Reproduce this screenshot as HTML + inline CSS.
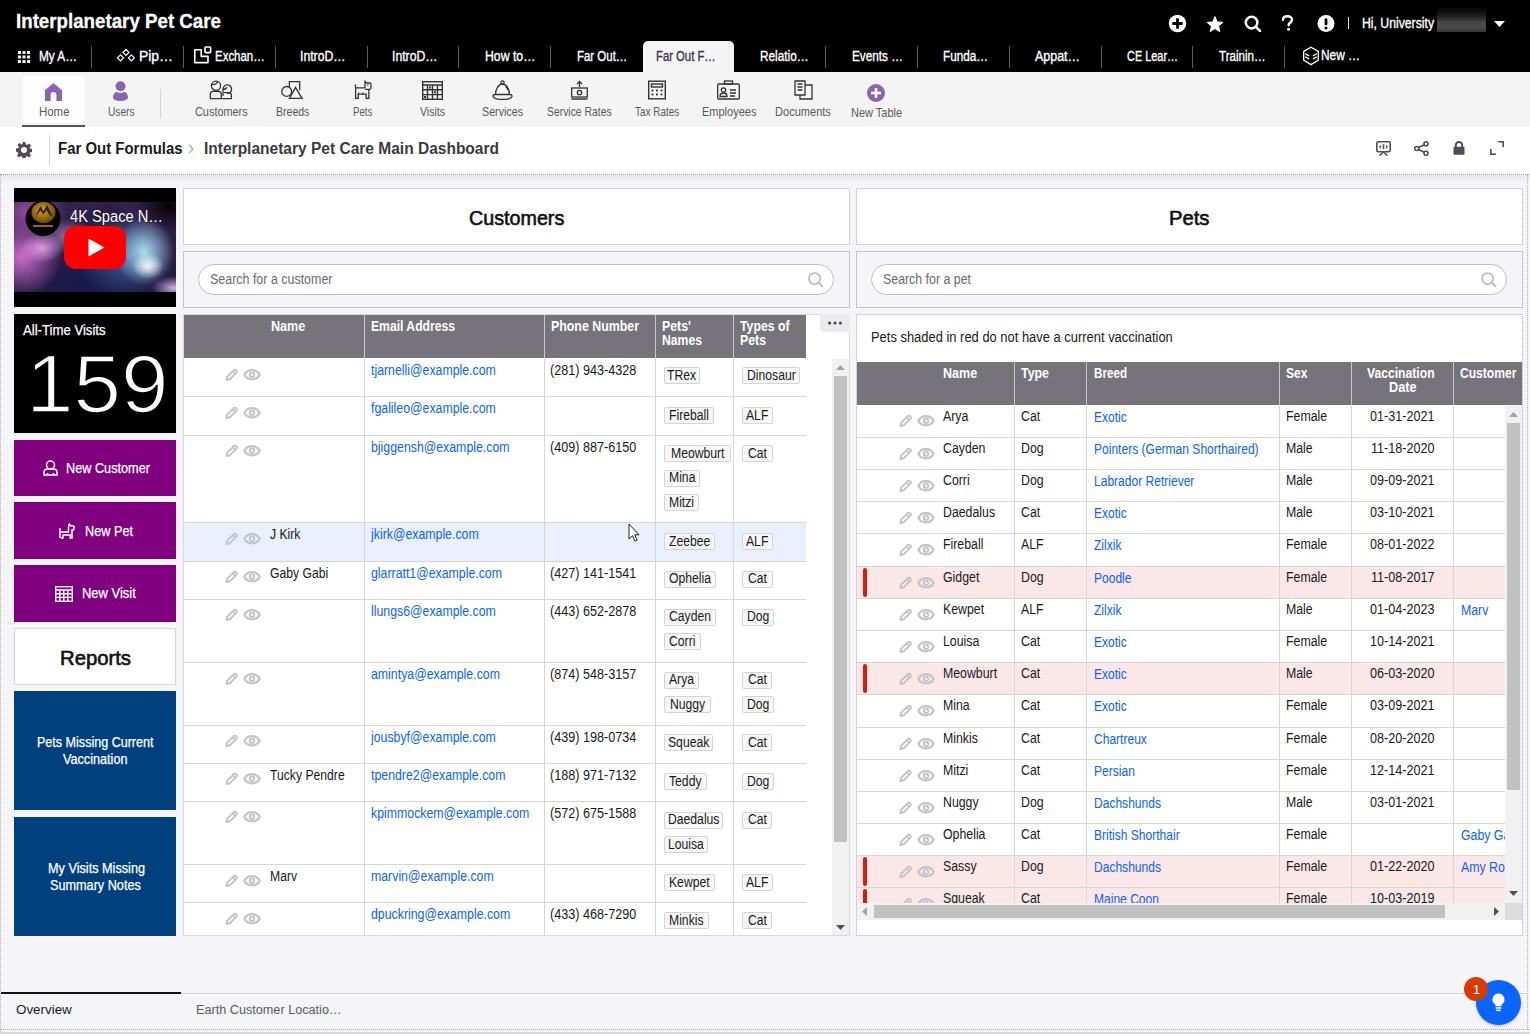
<!DOCTYPE html>
<html><head><meta charset="utf-8">
<style>
*{box-sizing:border-box;margin:0;padding:0}
html,body{width:1530px;height:1034px;overflow:hidden}
body{font-family:"Liberation Sans",sans-serif;background:#f4f4f6;position:relative;color:#1a1a1a}
.a{position:absolute}
.nw{white-space:nowrap}
svg{display:block}

</style></head><body>
<div class="a" style="left:0px;top:0px;width:1530px;height:72px;background:#000"></div>
<div class="a nw" style="left:16.00px;top:12.19px;font-size:19.5px;line-height:19.5px;color:#fff;font-weight:bold;transform:scaleX(0.9601);transform-origin:0 0;-webkit-text-stroke-width:0.3px">Interplanetary Pet Care</div>
<div class="a" style="left:643px;top:41px;width:91px;height:31px;background:#f4f4f4;border-radius:5px 5px 0 0"></div>
<div class="a" style="left:91px;top:46px;width:1px;height:22px;background:#5c5c5c"></div>
<div class="a" style="left:183px;top:46px;width:1px;height:22px;background:#5c5c5c"></div>
<div class="a" style="left:275px;top:46px;width:1px;height:22px;background:#5c5c5c"></div>
<div class="a" style="left:367px;top:46px;width:1px;height:22px;background:#5c5c5c"></div>
<div class="a" style="left:458px;top:46px;width:1px;height:22px;background:#5c5c5c"></div>
<div class="a" style="left:550px;top:46px;width:1px;height:22px;background:#5c5c5c"></div>
<div class="a" style="left:825px;top:46px;width:1px;height:22px;background:#5c5c5c"></div>
<div class="a" style="left:917px;top:46px;width:1px;height:22px;background:#5c5c5c"></div>
<div class="a" style="left:1009px;top:46px;width:1px;height:22px;background:#5c5c5c"></div>
<div class="a" style="left:1101px;top:46px;width:1px;height:22px;background:#5c5c5c"></div>
<div class="a" style="left:1192px;top:46px;width:1px;height:22px;background:#5c5c5c"></div>
<div class="a" style="left:1284px;top:46px;width:1px;height:22px;background:#5c5c5c"></div>
<div class="a nw" style="left:39.00px;top:49.15px;font-size:14px;line-height:14px;color:#fff;transform:scaleX(0.8421);transform-origin:0 0;-webkit-text-stroke-width:0.35px">My A…</div>
<div class="a nw" style="left:138.80px;top:49.15px;font-size:14px;line-height:14px;color:#fff;transform:scaleX(0.9932);transform-origin:0 0;-webkit-text-stroke-width:0.35px">Pip…</div>
<div class="a nw" style="left:214.60px;top:49.15px;font-size:14px;line-height:14px;color:#fff;transform:scaleX(0.8187);transform-origin:0 0;-webkit-text-stroke-width:0.35px">Exchan…</div>
<div class="a nw" style="left:300.40px;top:49.15px;font-size:14px;line-height:14px;color:#fff;transform:scaleX(0.8729);transform-origin:0 0;-webkit-text-stroke-width:0.35px">IntroD…</div>
<div class="a nw" style="left:392.00px;top:49.15px;font-size:14px;line-height:14px;color:#fff;transform:scaleX(0.8729);transform-origin:0 0;-webkit-text-stroke-width:0.35px">IntroD…</div>
<div class="a nw" style="left:484.70px;top:49.15px;font-size:14px;line-height:14px;color:#fff;transform:scaleX(0.8753);transform-origin:0 0;-webkit-text-stroke-width:0.35px">How to…</div>
<div class="a nw" style="left:576.50px;top:49.15px;font-size:14px;line-height:14px;color:#fff;transform:scaleX(0.8183);transform-origin:0 0;-webkit-text-stroke-width:0.35px">Far Out…</div>
<div class="a nw" style="left:656.00px;top:49.15px;font-size:14px;line-height:14px;color:#3c3650;transform:scaleX(0.8064);transform-origin:0 0;-webkit-text-stroke-width:0.35px">Far Out F…</div>
<div class="a nw" style="left:759.70px;top:49.15px;font-size:14px;line-height:14px;color:#fff;transform:scaleX(0.8421);transform-origin:0 0;-webkit-text-stroke-width:0.35px">Relatio…</div>
<div class="a nw" style="left:851.50px;top:49.15px;font-size:14px;line-height:14px;color:#fff;transform:scaleX(0.8402);transform-origin:0 0;-webkit-text-stroke-width:0.35px">Events …</div>
<div class="a nw" style="left:943.20px;top:49.15px;font-size:14px;line-height:14px;color:#fff;transform:scaleX(0.8379);transform-origin:0 0;-webkit-text-stroke-width:0.35px">Funda…</div>
<div class="a nw" style="left:1035.00px;top:49.15px;font-size:14px;line-height:14px;color:#fff;transform:scaleX(0.8894);transform-origin:0 0;-webkit-text-stroke-width:0.35px">Appat…</div>
<div class="a nw" style="left:1126.60px;top:49.15px;font-size:14px;line-height:14px;color:#fff;transform:scaleX(0.7803);transform-origin:0 0;-webkit-text-stroke-width:0.35px">CE Lear…</div>
<div class="a nw" style="left:1218.80px;top:49.15px;font-size:14px;line-height:14px;color:#fff;transform:scaleX(0.8262);transform-origin:0 0;-webkit-text-stroke-width:0.35px">Trainin…</div>
<div class="a nw" style="left:1320.50px;top:47.95px;font-size:14px;line-height:14px;color:#fff;transform:scaleX(0.8496);transform-origin:0 0;-webkit-text-stroke-width:0.35px">New …</div>
<svg class="a" style="left:18px;top:51px;" width="12" height="12" viewBox="0 0 12 12"><g fill="#fff"><rect x="0" y="0" width="3" height="3"/><rect x="4.5" y="0" width="3" height="3"/><rect x="9" y="0" width="3" height="3"/><rect x="0" y="4.5" width="3" height="3"/><rect x="4.5" y="4.5" width="3" height="3"/><rect x="9" y="4.5" width="3" height="3"/><rect x="0" y="9" width="3" height="3"/><rect x="4.5" y="9" width="3" height="3"/><rect x="9" y="9" width="3" height="3"/></g></svg>
<svg class="a" style="left:116px;top:48px;" width="19" height="15" viewBox="0 0 19 15"><g fill="none" stroke="#fff" stroke-width="1.3" stroke-linejoin="round"><path d="M4.5 6.9l3 3-3 3-3-3zM10 1.4l3 3-3 3-3-3zM15.4 6.9l3 3-3 3-3-3z"/></g></svg>
<svg class="a" style="left:193px;top:46px;" width="19" height="18" viewBox="0 0 19 18"><g fill="none" stroke="#fff" stroke-width="1.6" stroke-linejoin="round"><path d="M1.8 3.8h6.4v6.6h6.8v6.2H1.8z"/><rect x="12" y="1" width="5.6" height="5.6" rx="0.8"/></g></svg>
<svg class="a" style="left:1302px;top:46px;" width="18" height="20" viewBox="0 0 18 20"><g fill="none" stroke="#fff" stroke-width="1.3" stroke-linejoin="round" stroke-linecap="round"><path d="M9 1.2l7.3 4.2v8.8L9 18.6 1.7 14.2V5.4z"/><path d="M3.6 8l3 1.6M3.6 11l3 1.6M14.4 8l-3 1.6M14.4 11l-3 1.6"/></g></svg>
<svg class="a" style="left:1168px;top:14px;" width="19" height="19" viewBox="0 0 19 19"><circle cx="9.5" cy="9.5" r="8.7" fill="#fff"/><rect x="8.1" y="4.3" width="2.8" height="10.4" rx="0.5" fill="#000"/><rect x="4.3" y="8.1" width="10.4" height="2.8" rx="0.5" fill="#000"/></svg>
<svg class="a" style="left:1206px;top:15px;" width="18" height="17" viewBox="0 0 18 17"><path d="M9.00,1.60 L11.17,6.91 L16.89,7.34 L12.52,11.04 L13.88,16.61 L9.00,13.60 L4.12,16.61 L5.48,11.04 L1.11,7.34 L6.83,6.91z" fill="#fff" stroke="#fff" stroke-width="1" stroke-linejoin="round"/></svg>
<svg class="a" style="left:1244px;top:15px;" width="18" height="17" viewBox="0 0 18 17"><circle cx="7.6" cy="7.6" r="5.8" fill="none" stroke="#fff" stroke-width="2.5"/><path d="M11.7 11.7l4.3 4.3" stroke="#fff" stroke-width="2.6" stroke-linecap="round"/></svg>
<svg class="a" style="left:1281px;top:15px;" width="13" height="16" viewBox="0 0 13 16"><path d="M2 4.8C2 2.4 4 1.2 6.5 1.2S11 2.6 11 4.7c0 2.6-3.4 3-3.4 5.6" fill="none" stroke="#fff" stroke-width="2.4" stroke-linecap="round"/><circle cx="7.5" cy="14.2" r="1.5" fill="#fff"/></svg>
<svg class="a" style="left:1317px;top:15px;" width="18" height="17" viewBox="0 0 18 17"><circle cx="9" cy="8.5" r="8.5" fill="#fff"/><rect x="7.6" y="3.3" width="2.8" height="7" rx="1.2" fill="#000"/><circle cx="9" cy="12.9" r="1.5" fill="#000"/></svg>
<div class="a" style="left:1348px;top:17px;width:1px;height:12px;background:#ddd"></div>
<div class="a nw" style="left:1362.00px;top:15.55px;font-size:14px;line-height:14px;color:#fff;transform:scaleX(0.8731);transform-origin:0 0;-webkit-text-stroke-width:0.35px">Hi, University</div>
<div class="a" style="left:1437px;top:8px;width:49px;height:24px;background:linear-gradient(#080808 5%,#1a1a1a 30%,#464847 60%,#4a4b49 80%,#353535)"></div>
<svg class="a" style="left:1494px;top:21px;" width="11" height="6" viewBox="0 0 11 6"><path d="M0 0h11L5.5 6z" fill="#fff"/></svg>
<div class="a" style="left:0px;top:72px;width:1530px;height:55px;background:#f4f4f4"></div>
<div class="a" style="left:22px;top:76px;width:63px;height:47px;background:#fdfdfd;border-radius:5px 5px 0 0"></div>
<div class="a" style="left:22px;top:125px;width:63px;height:2px;background:#555"></div>
<div class="a" style="left:160px;top:89px;width:1px;height:29px;background:#d2d2d2"></div>
<div class="a nw" style="left:38.55px;top:106.10px;font-size:12.4px;line-height:12.4px;color:#5a5a5a;transform:scaleX(0.9225);transform-origin:0 0;">Home</div>
<div class="a nw" style="left:107.70px;top:106.10px;font-size:12.4px;line-height:12.4px;color:#5a5a5a;transform:scaleX(0.8220);transform-origin:0 0;">Users</div>
<div class="a nw" style="left:194.75px;top:106.10px;font-size:12.4px;line-height:12.4px;color:#5a5a5a;transform:scaleX(0.8797);transform-origin:0 0;">Customers</div>
<div class="a nw" style="left:275.60px;top:106.10px;font-size:12.4px;line-height:12.4px;color:#5a5a5a;transform:scaleX(0.8506);transform-origin:0 0;">Breeds</div>
<div class="a nw" style="left:352.65px;top:106.10px;font-size:12.4px;line-height:12.4px;color:#5a5a5a;transform:scaleX(0.7783);transform-origin:0 0;">Pets</div>
<div class="a nw" style="left:420.00px;top:106.10px;font-size:12.4px;line-height:12.4px;color:#5a5a5a;transform:scaleX(0.8506);transform-origin:0 0;">Visits</div>
<div class="a nw" style="left:482.00px;top:106.10px;font-size:12.4px;line-height:12.4px;color:#5a5a5a;transform:scaleX(0.8629);transform-origin:0 0;">Services</div>
<div class="a nw" style="left:547.40px;top:106.10px;font-size:12.4px;line-height:12.4px;color:#5a5a5a;transform:scaleX(0.8374);transform-origin:0 0;">Service Rates</div>
<div class="a nw" style="left:634.80px;top:106.10px;font-size:12.4px;line-height:12.4px;color:#5a5a5a;transform:scaleX(0.8023);transform-origin:0 0;">Tax Rates</div>
<div class="a nw" style="left:701.50px;top:106.10px;font-size:12.4px;line-height:12.4px;color:#5a5a5a;transform:scaleX(0.8875);transform-origin:0 0;">Employees</div>
<div class="a nw" style="left:775.35px;top:106.10px;font-size:12.4px;line-height:12.4px;color:#5a5a5a;transform:scaleX(0.8919);transform-origin:0 0;">Documents</div>
<div class="a nw" style="left:850.85px;top:106.80px;font-size:12.4px;line-height:12.4px;color:#5a5a5a;transform:scaleX(0.8865);transform-origin:0 0;">New Table</div>
<svg class="a" style="left:45px;top:83px;" width="17" height="18" viewBox="0 0 17 18"><path d="M8.5 0L17 7.2V18h-5.6v-6.2a2.9 2.9 0 0 0-5.8 0V18H0V7.2z" fill="#8a64b0"/></svg>
<svg class="a" style="left:113px;top:81px;" width="15" height="20" viewBox="0 0 15 20"><circle cx="7.5" cy="5.2" r="5" fill="#8a64b0"/><path d="M0 16.5c0-3.6 2-5.6 4.2-5.6 2 1.3 4.6 1.3 6.6 0 2.2 0 4.2 2 4.2 5.6 0 2-3.4 3.5-7.5 3.5S0 18.5 0 16.5z" fill="#8a64b0"/></svg>
<svg class="a" style="left:209px;top:80px;" width="24" height="20" viewBox="0 0 24 20"><g fill="none" stroke="#333" stroke-width="1.3"><circle cx="7" cy="5.7" r="4.6"/><path d="M3 4.6c2 .3 4.3-.6 5.6-2.4M1.3 18.6v-4.2c0-1.7 1.2-3 3-3h5c1.7 0 3 1.3 3 3v4.2zM13.2 18.6h9.2v-3.2c0-1.5-1.2-2.7-2.7-2.7h-4.6M14 9.5a4.3 4.3 0 1 1 4.3 4M14 9.5v6.5M14 9.5c1.5 0 3-.8 4-2"/></g></svg>
<svg class="a" style="left:281px;top:80px;" width="23" height="20" viewBox="0 0 23 20"><g fill="none" stroke="#333" stroke-width="1.3"><circle cx="5.7" cy="11.4" r="4.9"/><path d="M8.4 7.3V1.7h10.3v8.5M8.5 18.4l6-11 6.5 11z"/></g></svg>
<svg class="a" style="left:354px;top:80px;" width="18" height="20" viewBox="0 0 18 20"><g fill="none" stroke="#333" stroke-width="1.3"><path d="M1.6 4.5c-.3 1-.3 2.2.2 3.2M1.6 7.8h9.6M1.6 7.8v10.6h2.6v-4.2h8v4.2h2.7V9.3M11 7.8V1.5l1.5 1.5h3c.9 0 1.5.6 1.5 1.5v3.3c0 .9-.6 1.5-1.5 1.5H11M4.5 12.5v1M9 12.5v1"/></g><circle cx="13.8" cy="5.2" r=".7" fill="#333"/></svg>
<svg class="a" style="left:422px;top:80px;" width="21" height="20" viewBox="0 0 21 20"><g fill="none" stroke="#333" stroke-width="1.4"><rect x="0.7" y="1.7" width="19.6" height="17.6"/><path d="M1 5h19M1 9.8h19M1 14.6h19M5.5 5v14M10.5 5v14M15.5 5v14"/></g><g fill="#333"><rect x="7" y="6.5" width="2" height="2"/><rect x="12" y="11.3" width="2" height="2"/><rect x="2" y="16" width="2" height="2"/></g></svg>
<svg class="a" style="left:492px;top:80px;" width="21" height="20" viewBox="0 0 21 20"><g fill="none" stroke="#333" stroke-width="1.3"><circle cx="10.5" cy="2.5" r="1.6"/><path d="M3.5 14.5c0-5 3-10.5 7-10.5s7 5.5 7 10.5M1 16.5c0-1.5 1-2 2-2h15c1 0 2 .5 2 2 0 1.5-4 3-9.5 3S1 18 1 16.5zM13.5 6.5c1.3.8 2 2 2.3 3.5"/></g></svg>
<svg class="a" style="left:571px;top:80px;" width="17" height="20" viewBox="0 0 17 20"><g fill="none" stroke="#333" stroke-width="1.3"><rect x="0.7" y="8" width="15.6" height="9"/><circle cx="8.5" cy="12.5" r="2.2"/><path d="M8.5 7V1.5M6 4l2.5-2.5L11 4M0.5 19h16M3 10.5l0 0M14 14.5l0 0"/></g></svg>
<svg class="a" style="left:648px;top:80px;" width="18" height="20" viewBox="0 0 18 20"><g fill="none" stroke="#333" stroke-width="1.4"><rect x="0.7" y="1.2" width="16.6" height="17.6"/><rect x="3.5" y="4" width="11" height="3"/></g><g fill="#333"><circle cx="4.5" cy="10.5" r="1.1"/><circle cx="9" cy="10.5" r="1.1"/><circle cx="13.5" cy="10.5" r="1.1"/><circle cx="4.5" cy="14.5" r="1.1"/><circle cx="9" cy="14.5" r="1.1"/><circle cx="13.5" cy="14.5" r="1.1"/></g></svg>
<svg class="a" style="left:717px;top:80px;" width="23" height="20" viewBox="0 0 23 20"><g fill="none" stroke="#333" stroke-width="1.3"><rect x="0.7" y="4" width="21.6" height="15" rx="1"/><rect x="7.5" y="1" width="8" height="3"/><circle cx="6.5" cy="10" r="2.2"/><path d="M3 16.5c0-2.5 1.5-3.5 3.5-3.5s3.5 1 3.5 3.5zM13 10h6M13 13h6M13 16h5"/></g></svg>
<svg class="a" style="left:794px;top:80px;" width="19" height="20" viewBox="0 0 19 20"><g fill="none" stroke="#333" stroke-width="1.3"><path d="M1 1h10v14H1zM11 5h7v14H6v-4M3.5 4h5M3.5 7h5M3.5 10h5"/></g></svg>
<svg class="a" style="left:867px;top:84px;" width="18" height="18" viewBox="0 0 18 18"><circle cx="9" cy="9" r="9" fill="#8a64b0"/><rect x="7.7" y="4" width="2.6" height="10" fill="#fff"/><rect x="4" y="7.7" width="10" height="2.6" fill="#fff"/></svg>
<div class="a" style="left:0px;top:127px;width:1530px;height:47px;background:#fff"></div>
<svg class="a" style="left:16px;top:142px;" width="16" height="16" viewBox="0 0 16 16"><path fill="#4f4b58" d="M6.6 0h2.8l.4 2.3 1.3.6 1.9-1.4 2 2-1.4 1.9.6 1.3 2.3.4v2.8l-2.3.4-.6 1.3 1.4 1.9-2 2-1.9-1.4-1.3.6-.4 2.3H6.6l-.4-2.3-1.3-.6-1.9 1.4-2-2 1.4-1.9-.6-1.3L0 9.4V6.6l2.3-.4.6-1.3-1.4-1.9 2-2 1.9 1.4 1.3-.6zM8 5a3 3 0 1 0 0 6 3 3 0 0 0 0-6z"/></svg>
<div class="a" style="left:49px;top:135px;width:1px;height:31px;background:#d8d8d8"></div>
<div class="a nw" style="left:58.00px;top:140.92px;font-size:15.8px;line-height:15.8px;color:#1a1a1a;font-weight:bold;transform:scaleX(0.9463);transform-origin:0 0;">Far Out Formulas</div>
<svg class="a" style="left:188px;top:144px;" width="6" height="10" viewBox="0 0 6 10"><path d="M1 1l4 4-4 4" fill="none" stroke="#aaa" stroke-width="1.3"/></svg>
<div class="a nw" style="left:204.00px;top:140.92px;font-size:15.8px;line-height:15.8px;color:#3a3a42;font-weight:bold;transform:scaleX(0.9826);transform-origin:0 0;">Interplanetary Pet Care Main Dashboard</div>
<svg class="a" style="left:1376px;top:141px;" width="15" height="15" viewBox="0 0 15 15"><g fill="none" stroke="#4f4b58" stroke-width="1.6"><rect x="0.8" y="0.8" width="13.4" height="10" rx="1.5"/><path d="M3.5 14.5l4-3.5 4 3.5"/></g><g stroke="#4f4b58" stroke-width="1.6"><path d="M4.3 4.5v2.5M7.5 3.2v5M10.7 4.5v2.5"/></g></svg>
<svg class="a" style="left:1414px;top:141px;" width="15" height="15" viewBox="0 0 15 15"><g fill="none" stroke="#4f4b58" stroke-width="1.6"><circle cx="12" cy="2.8" r="2"/><circle cx="2.8" cy="7.5" r="2"/><circle cx="12" cy="12.2" r="2"/><path d="M4.6 6.5l5.6-2.8M4.6 8.5l5.6 2.8"/></g></svg>
<svg class="a" style="left:1453px;top:141px;" width="12" height="14" viewBox="0 0 12 14"><path d="M2.8 6V4.2a3.2 3.2 0 0 1 6.4 0V6" fill="none" stroke="#4f4b58" stroke-width="2"/><rect x="0.5" y="5.8" width="11" height="8" rx="1" fill="#4f4b58"/></svg>
<svg class="a" style="left:1490px;top:141px;" width="14" height="14" viewBox="0 0 14 14"><g fill="none" stroke="#4f4b58" stroke-width="1.6"><path d="M8 0.8h5.2V6M0.8 8v5.2H6"/></g></svg>
<div class="a" style="left:0px;top:174px;width:1530px;height:860px;background:#f5f5f7;border-top:1px dotted #9c9c9c;border-left:1px dotted #b0b0b0"></div>
<div class="a" style="left:1px;top:175px;width:1529px;height:8px;background:linear-gradient(#e8e8ec,#f5f5f7)"></div>
<div class="a" style="left:1527px;top:175px;width:1px;height:855px;border-left:1px dotted #b0b0b0"></div>
<div class="a" style="left:0px;top:1029px;width:1530px;height:1px;border-top:1px dotted #a0a0a0"></div>
<div class="a" style="left:0px;top:1032px;width:1530px;height:2px;background:#d8d8d8"></div>
<div class="a" style="left:14px;top:188px;width:162px;height:119px;background:#000"></div>
<div class="a" style="left:14px;top:202px;width:162px;height:90px;background:radial-gradient(ellipse 16px 13px at 134px 64px,rgba(250,253,255,.95),rgba(250,253,255,0)),radial-gradient(ellipse 30px 34px at 130px 50px,rgba(175,228,245,.95),rgba(175,228,245,0)),radial-gradient(ellipse 22px 12px at 160px 86px,rgba(230,190,250,.9),rgba(230,190,250,0)),radial-gradient(ellipse 34px 24px at 156px 4px,rgba(0,0,0,.95),rgba(0,0,0,0)),radial-gradient(ellipse 50px 45px at 112px 52px,rgba(60,105,175,.85),rgba(60,105,175,0)),radial-gradient(ellipse 22px 15px at 28px 46px,rgba(240,170,240,.85),rgba(240,170,240,0)),radial-gradient(ellipse 40px 40px at 8px 55px,rgba(215,110,215,.95),rgba(215,110,215,0)),radial-gradient(ellipse 40px 26px at 14px 10px,rgba(160,80,170,.9),rgba(160,80,170,0)),radial-gradient(ellipse 26px 18px at 52px 34px,rgba(205,160,225,.6),rgba(205,160,225,0)),radial-gradient(ellipse 45px 26px at 70px 78px,rgba(25,25,80,.95),rgba(25,25,80,0)),radial-gradient(ellipse 25px 20px at 95px 18px,rgba(40,20,60,.8),rgba(40,20,60,0)),linear-gradient(#35204a,#1e1a40)"></div>
<svg class="a" style="left:25px;top:200px;" width="36" height="36" viewBox="0 0 36 36"><defs><radialGradient id="gd" cx=".45" cy=".4" r=".6"><stop offset="0" stop-color="#d8a020"/><stop offset="1" stop-color="#6a4a08"/></radialGradient></defs><circle cx="18" cy="18.5" r="17.5" fill="#050505"/><ellipse cx="18.5" cy="12.5" rx="12" ry="10.5" fill="url(#gd)"/><path d="M10 17L15.5 6l3 5.5L22 5l6 12-4-2.5-2.5-4.5-3 4.5-3-4z" fill="#2e2006"/><rect x="8" y="25" width="20" height="2" fill="#8a6a18"/></svg>
<div class="a nw" style="left:70.00px;top:209.45px;font-size:16px;line-height:16px;color:#fff;transform:scaleX(0.9172);transform-origin:0 0;text-shadow:0 0 2px rgba(0,0,0,.6)">4K Space N…</div>
<svg class="a" style="left:64px;top:226px;" width="62" height="43" viewBox="0 0 62 43"><rect x="0" y="0" width="62" height="43" rx="12" fill="#f00"/><path d="M24.5 12.5L40.5 21.5 24.5 30.5z" fill="#fff"/></svg>
<div class="a" style="left:14px;top:314px;width:162px;height:119px;background:#000"></div>
<div class="a nw" style="left:23.20px;top:322.88px;font-size:14.2px;line-height:14.2px;color:#fff;transform:scaleX(0.9273);transform-origin:0 0;-webkit-text-stroke-width:0.25px">All-Time Visits</div>
<div class="a nw" style="left:25.70px;top:343.92px;font-size:81px;line-height:81px;color:#fff;transform:scaleX(1.0540);transform-origin:0 0;-webkit-text-stroke:1.6px #000">159</div>
<div class="a" style="left:14px;top:440px;width:162px;height:56px;background:#800080"></div>
<div class="a" style="left:14px;top:502px;width:162px;height:57px;background:#800080"></div>
<div class="a" style="left:14px;top:565px;width:162px;height:57px;background:#800080"></div>
<div class="a nw" style="left:66.40px;top:460.92px;font-size:14.5px;line-height:14.5px;color:#fff;transform:scaleX(0.8760);transform-origin:0 0;-webkit-text-stroke-width:0.25px">New Customer</div>
<div class="a nw" style="left:84.50px;top:523.62px;font-size:14.5px;line-height:14.5px;color:#fff;transform:scaleX(0.8757);transform-origin:0 0;-webkit-text-stroke-width:0.25px">New Pet</div>
<div class="a nw" style="left:81.50px;top:585.52px;font-size:14.5px;line-height:14.5px;color:#fff;transform:scaleX(0.8941);transform-origin:0 0;-webkit-text-stroke-width:0.25px">New Visit</div>
<svg class="a" style="left:43px;top:460px;" width="15" height="16" viewBox="0 0 15 16"><g fill="none" stroke="#fff" stroke-width="1.5"><circle cx="7.5" cy="5" r="4"/><path d="M1 15v-2.5C1 10.5 2.5 9 4.5 9h6c2 0 3.5 1.5 3.5 3.5V15zM4.5 15v-2M10.5 15v-2"/></g></svg>
<svg class="a" style="left:59px;top:523px;" width="16" height="16" viewBox="0 0 16 16"><g fill="none" stroke="#fff" stroke-width="1.5"><path d="M1 5v10M1 9h8.5V5c0-1.3.2-3 1-4l1 1.8h2.5c.8 0 1.2.8 1 2L14.5 7H13v8h-1.8v-3H4v3H2"/></g></svg>
<svg class="a" style="left:55px;top:586px;" width="18" height="16" viewBox="0 0 18 16"><g fill="none" stroke="#fff" stroke-width="1.4"><rect x="0.7" y="0.7" width="16.6" height="14.6"/><path d="M1 4h16M1 7.7h16M1 11.4h16M4.8 4v11M8.8 4v11M12.8 4v11"/></g></svg>
<div class="a" style="left:14px;top:628px;width:162px;height:57px;background:#fff;border:1px solid #d6d6da"></div>
<div class="a nw" style="left:59.80px;top:648.74px;font-size:19.8px;line-height:19.8px;color:#111;transform:scaleX(1.0250);transform-origin:0 0;-webkit-text-stroke:0.6px #111">Reports</div>
<div class="a" style="left:14px;top:691px;width:162px;height:119px;background:#00407f"></div>
<div class="a" style="left:14px;top:817px;width:162px;height:119px;background:#00407f"></div>
<div class="a nw" style="left:36.95px;top:735.18px;font-size:14.2px;line-height:14.2px;color:#fff;transform:scaleX(0.8848);transform-origin:0 0;-webkit-text-stroke-width:0.25px">Pets Missing Current</div>
<div class="a nw" style="left:63.25px;top:751.98px;font-size:14.2px;line-height:14.2px;color:#fff;transform:scaleX(0.8922);transform-origin:0 0;-webkit-text-stroke-width:0.25px">Vaccination</div>
<div class="a nw" style="left:47.50px;top:860.98px;font-size:14.2px;line-height:14.2px;color:#fff;transform:scaleX(0.8938);transform-origin:0 0;-webkit-text-stroke-width:0.25px">My Visits Missing</div>
<div class="a nw" style="left:50.00px;top:878.18px;font-size:14.2px;line-height:14.2px;color:#fff;transform:scaleX(0.8928);transform-origin:0 0;-webkit-text-stroke-width:0.25px">Summary Notes</div>
<div class="a" style="left:181px;top:993px;width:1346px;height:1px;background:#d4d4d8"></div>
<div class="a" style="left:1px;top:992px;width:180px;height:2px;background:#111"></div>
<div class="a nw" style="left:16.00px;top:1003.20px;font-size:13.7px;line-height:13.7px;color:#1a1a2a;transform:scaleX(0.9781);transform-origin:0 0;">Overview</div>
<div class="a nw" style="left:196.00px;top:1003.20px;font-size:13.7px;line-height:13.7px;color:#5a5a6a;transform:scaleX(0.9245);transform-origin:0 0;">Earth Customer Locatio…</div>
<div class="a" style="left:1476px;top:980px;width:45px;height:45px;background:#0866ff;border-radius:50%;box-shadow:0 1px 3px rgba(0,0,0,.25)"></div>
<svg class="a" style="left:1491px;top:993px;" width="15" height="19" viewBox="0 0 15 19"><path d="M7.5 0.5a6 6 0 0 0-3.8 10.6c.6.6.9 1.3.9 2.1h5.8c0-.8.3-1.5.9-2.1A6 6 0 0 0 7.5.5z" fill="#fff"/><rect x="4.6" y="14.2" width="5.8" height="1.5" fill="#fff"/><rect x="5.2" y="16.6" width="4.6" height="1.5" fill="#fff"/></svg>
<div class="a" style="left:1464px;top:977px;width:24px;height:24px;background:#d83b01;border-radius:50%"></div>
<div class="a nw" style="left:1472.74px;top:982.87px;font-size:13.5px;line-height:13.5px;color:#fff;">1</div>
<div class="a" style="left:183px;top:188px;width:667px;height:57px;background:#fff;border:1px solid #d2d2d6"></div>
<div class="a nw" style="left:468.55px;top:208.84px;font-size:19.8px;line-height:19.8px;color:#111;transform:scaleX(0.9964);transform-origin:0 0;-webkit-text-stroke:0.6px #111">Customers</div>
<div class="a" style="left:183px;top:251px;width:667px;height:57px;background:#f5f5f7;border:1.5px solid #c4c3c8"></div>
<div class="a" style="left:198px;top:264px;width:636px;height:31px;background:#fff;border:1px solid #bfbfc3;border-radius:16px"></div>
<div class="a nw" style="left:210.30px;top:272.05px;font-size:14px;line-height:14px;color:#6b6b73;transform:scaleX(0.8894);transform-origin:0 0;">Search for a customer</div>
<svg class="a" style="left:807px;top:271px;" width="17" height="18" viewBox="0 0 17 18"><circle cx="7.6" cy="7.6" r="5.6" fill="none" stroke="#b5b5b9" stroke-width="1.5"/><path d="M11.6 11.6l4.3 4.3" stroke="#b5b5b9" stroke-width="1.7"/></svg>
<div class="a" style="left:856px;top:188px;width:667px;height:57px;background:#fff;border:1px solid #d2d2d6"></div>
<div class="a nw" style="left:1168.95px;top:208.84px;font-size:19.8px;line-height:19.8px;color:#111;transform:scaleX(1.0229);transform-origin:0 0;-webkit-text-stroke:0.6px #111">Pets</div>
<div class="a" style="left:856px;top:251px;width:667px;height:57px;background:#f5f5f7;border:1.5px solid #c4c3c8"></div>
<div class="a" style="left:871px;top:264px;width:636px;height:31px;background:#fff;border:1px solid #bfbfc3;border-radius:16px"></div>
<div class="a nw" style="left:883.30px;top:272.05px;font-size:14px;line-height:14px;color:#6b6b73;transform:scaleX(0.8833);transform-origin:0 0;">Search for a pet</div>
<svg class="a" style="left:1480px;top:271px;" width="17" height="18" viewBox="0 0 17 18"><circle cx="7.6" cy="7.6" r="5.6" fill="none" stroke="#b5b5b9" stroke-width="1.5"/><path d="M11.6 11.6l4.3 4.3" stroke="#b5b5b9" stroke-width="1.7"/></svg>
<div class="a" style="left:183px;top:314px;width:667px;height:622px;background:#fff;border:1px solid #d8d8dc"></div>
<div class="a" style="left:184px;top:315px;width:622px;height:43px;background:#77737b"></div>
<div class="a" style="left:184px;top:523px;width:622px;height:38px;background:#e9f0fc"></div>
<div class="a" style="left:364px;top:315px;width:1px;height:43px;background:#c9c7cc"></div>
<div class="a" style="left:364px;top:358px;width:1px;height:577px;background:#d6d6d6"></div>
<div class="a" style="left:544px;top:315px;width:1px;height:43px;background:#c9c7cc"></div>
<div class="a" style="left:544px;top:358px;width:1px;height:577px;background:#d6d6d6"></div>
<div class="a" style="left:655px;top:315px;width:1px;height:43px;background:#c9c7cc"></div>
<div class="a" style="left:655px;top:358px;width:1px;height:577px;background:#d6d6d6"></div>
<div class="a" style="left:733px;top:315px;width:1px;height:43px;background:#c9c7cc"></div>
<div class="a" style="left:733px;top:358px;width:1px;height:577px;background:#d6d6d6"></div>
<div class="a" style="left:184px;top:396px;width:622px;height:1px;background:#d6d6d6"></div>
<div class="a" style="left:184px;top:435px;width:622px;height:1px;background:#d6d6d6"></div>
<div class="a" style="left:184px;top:522px;width:622px;height:1px;background:#d6d6d6"></div>
<div class="a" style="left:184px;top:561px;width:622px;height:1px;background:#d6d6d6"></div>
<div class="a" style="left:184px;top:599px;width:622px;height:1px;background:#d6d6d6"></div>
<div class="a" style="left:184px;top:662px;width:622px;height:1px;background:#d6d6d6"></div>
<div class="a" style="left:184px;top:725px;width:622px;height:1px;background:#d6d6d6"></div>
<div class="a" style="left:184px;top:763px;width:622px;height:1px;background:#d6d6d6"></div>
<div class="a" style="left:184px;top:801px;width:622px;height:1px;background:#d6d6d6"></div>
<div class="a" style="left:184px;top:864px;width:622px;height:1px;background:#d6d6d6"></div>
<div class="a" style="left:184px;top:902px;width:622px;height:1px;background:#d6d6d6"></div>
<div class="a nw" style="left:270.55px;top:319.15px;font-size:14px;line-height:14px;color:#fff;font-weight:bold;transform:scaleX(0.8993);transform-origin:0 0;">Name</div>
<div class="a nw" style="left:371.00px;top:319.15px;font-size:14px;line-height:14px;color:#fff;font-weight:bold;transform:scaleX(0.8682);transform-origin:0 0;">Email Address</div>
<div class="a nw" style="left:550.60px;top:319.15px;font-size:14px;line-height:14px;color:#fff;font-weight:bold;transform:scaleX(0.8837);transform-origin:0 0;">Phone Number</div>
<div class="a nw" style="left:662.30px;top:319.15px;font-size:14px;line-height:14px;color:#fff;font-weight:bold;transform:scaleX(0.8813);transform-origin:0 0;">Pets'</div>
<div class="a nw" style="left:662.30px;top:333.15px;font-size:14px;line-height:14px;color:#fff;font-weight:bold;transform:scaleX(0.8710);transform-origin:0 0;">Names</div>
<div class="a nw" style="left:739.50px;top:319.15px;font-size:14px;line-height:14px;color:#fff;font-weight:bold;transform:scaleX(0.8756);transform-origin:0 0;">Types of</div>
<div class="a nw" style="left:739.50px;top:333.15px;font-size:14px;line-height:14px;color:#fff;font-weight:bold;transform:scaleX(0.8790);transform-origin:0 0;">Pets</div>
<div class="a" style="left:820px;top:314px;width:30px;height:18px;background:#ebebee;border-radius:0 0 0 4px"></div>
<svg class="a" style="left:826px;top:320px;" width="18" height="6" viewBox="0 0 18 6"><g fill="#4a4a52"><circle cx="3.6" cy="3" r="1.6"/><circle cx="9" cy="3" r="1.6"/><circle cx="14.4" cy="3" r="1.6"/></g></svg>
<div class="a" style="left:832px;top:359px;width:17px;height:576px;background:#f1f1f1"></div>
<div class="a" style="left:834px;top:376px;width:13px;height:466px;background:#c1c1c1"></div>
<svg class="a" style="left:836px;top:365px;" width="9" height="5" viewBox="0 0 9 5"><path d="M0 5L4.5 0 9 5z" fill="#a3a3a3"/></svg>
<svg class="a" style="left:836px;top:925px;" width="9" height="5" viewBox="0 0 9 5"><path d="M0 0h9L4.5 5z" fill="#505050"/></svg>
<svg class="a" style="left:224px;top:368px;" width="37" height="13" viewBox="0 0 37 13"><g fill="none" stroke="#c4c4c8" stroke-width="1.9" stroke-linejoin="round"><path d="M2.4 12l.7-3.2 6.8-6.8a1.4 1.4 0 0 1 2 0l.6.6a1.4 1.4 0 0 1 0 2L5.7 11.3z"/><path d="M8.7 3.3l2.3 2.3"/></g><path d="M20.3 6.8C22 3.6 24.8 2.2 28 2.2s6 1.4 7.7 4.6C34 10 31.2 11.4 28 11.4S22 10 20.3 6.8z" fill="none" stroke="#c4c4c8" stroke-width="2.2" stroke-linejoin="round"/><circle cx="28" cy="6.8" r="3.2" fill="#c4c4c8"/><path d="M27.7 5v2.2h2" stroke="#fff" stroke-width="1.1" fill="none"/></svg>
<div class="a nw" style="left:371.00px;top:362.55px;font-size:14px;line-height:14px;color:#0a64f4;transform:scaleX(0.8800);transform-origin:0 0;">tjarnelli@example.com</div>
<div class="a nw" style="left:550.30px;top:362.55px;font-size:14px;line-height:14px;color:#1a1a1a;transform:scaleX(0.9000);transform-origin:0 0;">(281) 943-4328</div>
<div class="a" style="left:664.2px;top:367.0px;width:35.6px;height:17px;background:#f7f7f7;border:1px solid #d4d4d4;border-radius:2px"></div>
<div class="a nw" style="left:667.45px;top:368.25px;font-size:14px;line-height:14px;color:#1a1a1a;transform:scaleX(0.8700);transform-origin:0 0;">TRex</div>
<div class="a" style="left:742.3px;top:367.0px;width:57.5px;height:17px;background:#f7f7f7;border:1px solid #d4d4d4;border-radius:2px"></div>
<div class="a nw" style="left:746.68px;top:368.25px;font-size:14px;line-height:14px;color:#1a1a1a;transform:scaleX(0.8700);transform-origin:0 0;">Dinosaur</div>
<svg class="a" style="left:224px;top:406px;" width="37" height="13" viewBox="0 0 37 13"><g fill="none" stroke="#c4c4c8" stroke-width="1.9" stroke-linejoin="round"><path d="M2.4 12l.7-3.2 6.8-6.8a1.4 1.4 0 0 1 2 0l.6.6a1.4 1.4 0 0 1 0 2L5.7 11.3z"/><path d="M8.7 3.3l2.3 2.3"/></g><path d="M20.3 6.8C22 3.6 24.8 2.2 28 2.2s6 1.4 7.7 4.6C34 10 31.2 11.4 28 11.4S22 10 20.3 6.8z" fill="none" stroke="#c4c4c8" stroke-width="2.2" stroke-linejoin="round"/><circle cx="28" cy="6.8" r="3.2" fill="#c4c4c8"/><path d="M27.7 5v2.2h2" stroke="#fff" stroke-width="1.1" fill="none"/></svg>
<div class="a nw" style="left:371.00px;top:400.55px;font-size:14px;line-height:14px;color:#0a64f4;transform:scaleX(0.8800);transform-origin:0 0;">fgalileo@example.com</div>
<div class="a" style="left:664.2px;top:406.5px;width:49.4px;height:17px;background:#f7f7f7;border:1px solid #d4d4d4;border-radius:2px"></div>
<div class="a nw" style="left:668.93px;top:407.65px;font-size:14px;line-height:14px;color:#1a1a1a;transform:scaleX(0.8700);transform-origin:0 0;">Fireball</div>
<div class="a" style="left:742.3px;top:406.5px;width:30.4px;height:17px;background:#f7f7f7;border:1px solid #d4d4d4;border-radius:2px"></div>
<div class="a nw" style="left:746.33px;top:407.65px;font-size:14px;line-height:14px;color:#1a1a1a;transform:scaleX(0.8700);transform-origin:0 0;">ALF</div>
<svg class="a" style="left:224px;top:444px;" width="37" height="13" viewBox="0 0 37 13"><g fill="none" stroke="#c4c4c8" stroke-width="1.9" stroke-linejoin="round"><path d="M2.4 12l.7-3.2 6.8-6.8a1.4 1.4 0 0 1 2 0l.6.6a1.4 1.4 0 0 1 0 2L5.7 11.3z"/><path d="M8.7 3.3l2.3 2.3"/></g><path d="M20.3 6.8C22 3.6 24.8 2.2 28 2.2s6 1.4 7.7 4.6C34 10 31.2 11.4 28 11.4S22 10 20.3 6.8z" fill="none" stroke="#c4c4c8" stroke-width="2.2" stroke-linejoin="round"/><circle cx="28" cy="6.8" r="3.2" fill="#c4c4c8"/><path d="M27.7 5v2.2h2" stroke="#fff" stroke-width="1.1" fill="none"/></svg>
<div class="a nw" style="left:371.00px;top:439.55px;font-size:14px;line-height:14px;color:#0a64f4;transform:scaleX(0.8800);transform-origin:0 0;">bjiggensh@example.com</div>
<div class="a nw" style="left:550.30px;top:439.55px;font-size:14px;line-height:14px;color:#1a1a1a;transform:scaleX(0.9000);transform-origin:0 0;">(409) 887-6150</div>
<div class="a" style="left:664.2px;top:444.5px;width:66.4px;height:17px;background:#f7f7f7;border:1px solid #d4d4d4;border-radius:2px"></div>
<div class="a nw" style="left:670.66px;top:445.75px;font-size:14px;line-height:14px;color:#1a1a1a;transform:scaleX(0.8700);transform-origin:0 0;">Meowburt</div>
<div class="a" style="left:664.2px;top:469.5px;width:36.1px;height:17px;background:#f7f7f7;border:1px solid #d4d4d4;border-radius:2px"></div>
<div class="a nw" style="left:669.04px;top:470.35px;font-size:14px;line-height:14px;color:#1a1a1a;transform:scaleX(0.8700);transform-origin:0 0;">Mina</div>
<div class="a" style="left:664.2px;top:494.0px;width:35.1px;height:17px;background:#f7f7f7;border:1px solid #d4d4d4;border-radius:2px"></div>
<div class="a nw" style="left:669.23px;top:494.95px;font-size:14px;line-height:14px;color:#1a1a1a;transform:scaleX(0.8700);transform-origin:0 0;">Mitzi</div>
<div class="a" style="left:742.3px;top:444.5px;width:30.4px;height:17px;background:#f7f7f7;border:1px solid #d4d4d4;border-radius:2px"></div>
<div class="a nw" style="left:748.02px;top:445.75px;font-size:14px;line-height:14px;color:#1a1a1a;transform:scaleX(0.8700);transform-origin:0 0;">Cat</div>
<svg class="a" style="left:224px;top:532px;" width="37" height="13" viewBox="0 0 37 13"><g fill="none" stroke="#c4c4c8" stroke-width="1.9" stroke-linejoin="round"><path d="M2.4 12l.7-3.2 6.8-6.8a1.4 1.4 0 0 1 2 0l.6.6a1.4 1.4 0 0 1 0 2L5.7 11.3z"/><path d="M8.7 3.3l2.3 2.3"/></g><path d="M20.3 6.8C22 3.6 24.8 2.2 28 2.2s6 1.4 7.7 4.6C34 10 31.2 11.4 28 11.4S22 10 20.3 6.8z" fill="none" stroke="#c4c4c8" stroke-width="2.2" stroke-linejoin="round"/><circle cx="28" cy="6.8" r="3.2" fill="#c4c4c8"/><path d="M27.7 5v2.2h2" stroke="#fff" stroke-width="1.1" fill="none"/></svg>
<div class="a nw" style="left:270.00px;top:526.55px;font-size:14px;line-height:14px;color:#1a1a1a;transform:scaleX(0.8700);transform-origin:0 0;">J Kirk</div>
<div class="a nw" style="left:371.00px;top:526.55px;font-size:14px;line-height:14px;color:#0a64f4;transform:scaleX(0.8800);transform-origin:0 0;">jkirk@example.com</div>
<div class="a" style="left:664.2px;top:532.5px;width:50.4px;height:17px;background:#f7f7f7;border:1px solid #d4d4d4;border-radius:2px"></div>
<div class="a nw" style="left:668.74px;top:533.65px;font-size:14px;line-height:14px;color:#1a1a1a;transform:scaleX(0.8700);transform-origin:0 0;">Zeebee</div>
<div class="a" style="left:742.3px;top:532.5px;width:30.4px;height:17px;background:#f7f7f7;border:1px solid #d4d4d4;border-radius:2px"></div>
<div class="a nw" style="left:746.33px;top:533.65px;font-size:14px;line-height:14px;color:#1a1a1a;transform:scaleX(0.8700);transform-origin:0 0;">ALF</div>
<svg class="a" style="left:224px;top:570px;" width="37" height="13" viewBox="0 0 37 13"><g fill="none" stroke="#c4c4c8" stroke-width="1.9" stroke-linejoin="round"><path d="M2.4 12l.7-3.2 6.8-6.8a1.4 1.4 0 0 1 2 0l.6.6a1.4 1.4 0 0 1 0 2L5.7 11.3z"/><path d="M8.7 3.3l2.3 2.3"/></g><path d="M20.3 6.8C22 3.6 24.8 2.2 28 2.2s6 1.4 7.7 4.6C34 10 31.2 11.4 28 11.4S22 10 20.3 6.8z" fill="none" stroke="#c4c4c8" stroke-width="2.2" stroke-linejoin="round"/><circle cx="28" cy="6.8" r="3.2" fill="#c4c4c8"/><path d="M27.7 5v2.2h2" stroke="#fff" stroke-width="1.1" fill="none"/></svg>
<div class="a nw" style="left:270.00px;top:565.55px;font-size:14px;line-height:14px;color:#1a1a1a;transform:scaleX(0.8700);transform-origin:0 0;">Gaby Gabi</div>
<div class="a nw" style="left:371.00px;top:565.55px;font-size:14px;line-height:14px;color:#0a64f4;transform:scaleX(0.8800);transform-origin:0 0;">glarratt1@example.com</div>
<div class="a nw" style="left:550.30px;top:565.55px;font-size:14px;line-height:14px;color:#1a1a1a;transform:scaleX(0.9000);transform-origin:0 0;">(427) 141-1541</div>
<div class="a" style="left:664.2px;top:570.5px;width:52.1px;height:17px;background:#f7f7f7;border:1px solid #d4d4d4;border-radius:2px"></div>
<div class="a nw" style="left:669.25px;top:571.45px;font-size:14px;line-height:14px;color:#1a1a1a;transform:scaleX(0.8700);transform-origin:0 0;">Ophelia</div>
<div class="a" style="left:742.3px;top:570.5px;width:30.4px;height:17px;background:#f7f7f7;border:1px solid #d4d4d4;border-radius:2px"></div>
<div class="a nw" style="left:748.02px;top:571.45px;font-size:14px;line-height:14px;color:#1a1a1a;transform:scaleX(0.8700);transform-origin:0 0;">Cat</div>
<svg class="a" style="left:224px;top:608px;" width="37" height="13" viewBox="0 0 37 13"><g fill="none" stroke="#c4c4c8" stroke-width="1.9" stroke-linejoin="round"><path d="M2.4 12l.7-3.2 6.8-6.8a1.4 1.4 0 0 1 2 0l.6.6a1.4 1.4 0 0 1 0 2L5.7 11.3z"/><path d="M8.7 3.3l2.3 2.3"/></g><path d="M20.3 6.8C22 3.6 24.8 2.2 28 2.2s6 1.4 7.7 4.6C34 10 31.2 11.4 28 11.4S22 10 20.3 6.8z" fill="none" stroke="#c4c4c8" stroke-width="2.2" stroke-linejoin="round"/><circle cx="28" cy="6.8" r="3.2" fill="#c4c4c8"/><path d="M27.7 5v2.2h2" stroke="#fff" stroke-width="1.1" fill="none"/></svg>
<div class="a nw" style="left:371.00px;top:603.55px;font-size:14px;line-height:14px;color:#0a64f4;transform:scaleX(0.8800);transform-origin:0 0;">llungs6@example.com</div>
<div class="a nw" style="left:550.30px;top:603.55px;font-size:14px;line-height:14px;color:#1a1a1a;transform:scaleX(0.9000);transform-origin:0 0;">(443) 652-2878</div>
<div class="a" style="left:664.2px;top:608.5px;width:51.7px;height:17px;background:#f7f7f7;border:1px solid #d4d4d4;border-radius:2px"></div>
<div class="a nw" style="left:669.05px;top:609.35px;font-size:14px;line-height:14px;color:#1a1a1a;transform:scaleX(0.8700);transform-origin:0 0;">Cayden</div>
<div class="a" style="left:664.2px;top:633.0px;width:36.7px;height:17px;background:#f7f7f7;border:1px solid #d4d4d4;border-radius:2px"></div>
<div class="a nw" style="left:669.35px;top:633.95px;font-size:14px;line-height:14px;color:#1a1a1a;transform:scaleX(0.8700);transform-origin:0 0;">Corri</div>
<div class="a" style="left:742.3px;top:608.5px;width:32px;height:17px;background:#f7f7f7;border:1px solid #d4d4d4;border-radius:2px"></div>
<div class="a nw" style="left:747.13px;top:609.35px;font-size:14px;line-height:14px;color:#1a1a1a;transform:scaleX(0.8700);transform-origin:0 0;">Dog</div>
<svg class="a" style="left:224px;top:672px;" width="37" height="13" viewBox="0 0 37 13"><g fill="none" stroke="#c4c4c8" stroke-width="1.9" stroke-linejoin="round"><path d="M2.4 12l.7-3.2 6.8-6.8a1.4 1.4 0 0 1 2 0l.6.6a1.4 1.4 0 0 1 0 2L5.7 11.3z"/><path d="M8.7 3.3l2.3 2.3"/></g><path d="M20.3 6.8C22 3.6 24.8 2.2 28 2.2s6 1.4 7.7 4.6C34 10 31.2 11.4 28 11.4S22 10 20.3 6.8z" fill="none" stroke="#c4c4c8" stroke-width="2.2" stroke-linejoin="round"/><circle cx="28" cy="6.8" r="3.2" fill="#c4c4c8"/><path d="M27.7 5v2.2h2" stroke="#fff" stroke-width="1.1" fill="none"/></svg>
<div class="a nw" style="left:371.00px;top:666.55px;font-size:14px;line-height:14px;color:#0a64f4;transform:scaleX(0.8800);transform-origin:0 0;">amintya@example.com</div>
<div class="a nw" style="left:550.30px;top:666.55px;font-size:14px;line-height:14px;color:#1a1a1a;transform:scaleX(0.9000);transform-origin:0 0;">(874) 548-3157</div>
<div class="a" style="left:664.2px;top:671.5px;width:34.7px;height:17px;background:#f7f7f7;border:1px solid #d4d4d4;border-radius:2px"></div>
<div class="a nw" style="left:669.02px;top:672.35px;font-size:14px;line-height:14px;color:#1a1a1a;transform:scaleX(0.8700);transform-origin:0 0;">Arya</div>
<div class="a" style="left:664.2px;top:696.0px;width:46.7px;height:17px;background:#f7f7f7;border:1px solid #d4d4d4;border-radius:2px"></div>
<div class="a nw" style="left:669.95px;top:696.95px;font-size:14px;line-height:14px;color:#1a1a1a;transform:scaleX(0.8700);transform-origin:0 0;">Nuggy</div>
<div class="a" style="left:742.3px;top:671.5px;width:30px;height:17px;background:#f7f7f7;border:1px solid #d4d4d4;border-radius:2px"></div>
<div class="a nw" style="left:747.82px;top:672.35px;font-size:14px;line-height:14px;color:#1a1a1a;transform:scaleX(0.8700);transform-origin:0 0;">Cat</div>
<div class="a" style="left:742.3px;top:696.0px;width:32px;height:17px;background:#f7f7f7;border:1px solid #d4d4d4;border-radius:2px"></div>
<div class="a nw" style="left:747.13px;top:696.95px;font-size:14px;line-height:14px;color:#1a1a1a;transform:scaleX(0.8700);transform-origin:0 0;">Dog</div>
<svg class="a" style="left:224px;top:734px;" width="37" height="13" viewBox="0 0 37 13"><g fill="none" stroke="#c4c4c8" stroke-width="1.9" stroke-linejoin="round"><path d="M2.4 12l.7-3.2 6.8-6.8a1.4 1.4 0 0 1 2 0l.6.6a1.4 1.4 0 0 1 0 2L5.7 11.3z"/><path d="M8.7 3.3l2.3 2.3"/></g><path d="M20.3 6.8C22 3.6 24.8 2.2 28 2.2s6 1.4 7.7 4.6C34 10 31.2 11.4 28 11.4S22 10 20.3 6.8z" fill="none" stroke="#c4c4c8" stroke-width="2.2" stroke-linejoin="round"/><circle cx="28" cy="6.8" r="3.2" fill="#c4c4c8"/><path d="M27.7 5v2.2h2" stroke="#fff" stroke-width="1.1" fill="none"/></svg>
<div class="a nw" style="left:371.00px;top:729.55px;font-size:14px;line-height:14px;color:#0a64f4;transform:scaleX(0.8800);transform-origin:0 0;">jousbyf@example.com</div>
<div class="a nw" style="left:550.30px;top:729.55px;font-size:14px;line-height:14px;color:#1a1a1a;transform:scaleX(0.9000);transform-origin:0 0;">(439) 198-0734</div>
<div class="a" style="left:664.2px;top:734.0px;width:49.3px;height:17px;background:#f7f7f7;border:1px solid #d4d4d4;border-radius:2px"></div>
<div class="a nw" style="left:668.19px;top:735.05px;font-size:14px;line-height:14px;color:#1a1a1a;transform:scaleX(0.8700);transform-origin:0 0;">Squeak</div>
<div class="a" style="left:742.3px;top:734.0px;width:30px;height:17px;background:#f7f7f7;border:1px solid #d4d4d4;border-radius:2px"></div>
<div class="a nw" style="left:747.82px;top:735.05px;font-size:14px;line-height:14px;color:#1a1a1a;transform:scaleX(0.8700);transform-origin:0 0;">Cat</div>
<svg class="a" style="left:224px;top:772px;" width="37" height="13" viewBox="0 0 37 13"><g fill="none" stroke="#c4c4c8" stroke-width="1.9" stroke-linejoin="round"><path d="M2.4 12l.7-3.2 6.8-6.8a1.4 1.4 0 0 1 2 0l.6.6a1.4 1.4 0 0 1 0 2L5.7 11.3z"/><path d="M8.7 3.3l2.3 2.3"/></g><path d="M20.3 6.8C22 3.6 24.8 2.2 28 2.2s6 1.4 7.7 4.6C34 10 31.2 11.4 28 11.4S22 10 20.3 6.8z" fill="none" stroke="#c4c4c8" stroke-width="2.2" stroke-linejoin="round"/><circle cx="28" cy="6.8" r="3.2" fill="#c4c4c8"/><path d="M27.7 5v2.2h2" stroke="#fff" stroke-width="1.1" fill="none"/></svg>
<div class="a nw" style="left:270.00px;top:767.55px;font-size:14px;line-height:14px;color:#1a1a1a;transform:scaleX(0.8700);transform-origin:0 0;">Tucky Pendre</div>
<div class="a nw" style="left:371.00px;top:767.55px;font-size:14px;line-height:14px;color:#0a64f4;transform:scaleX(0.8800);transform-origin:0 0;">tpendre2@example.com</div>
<div class="a nw" style="left:550.30px;top:767.55px;font-size:14px;line-height:14px;color:#1a1a1a;transform:scaleX(0.9000);transform-origin:0 0;">(188) 971-7132</div>
<div class="a" style="left:664.2px;top:772.5px;width:42.7px;height:17px;background:#f7f7f7;border:1px solid #d4d4d4;border-radius:2px"></div>
<div class="a nw" style="left:669.30px;top:773.75px;font-size:14px;line-height:14px;color:#1a1a1a;transform:scaleX(0.8700);transform-origin:0 0;">Teddy</div>
<div class="a" style="left:742.3px;top:772.5px;width:32px;height:17px;background:#f7f7f7;border:1px solid #d4d4d4;border-radius:2px"></div>
<div class="a nw" style="left:747.13px;top:773.75px;font-size:14px;line-height:14px;color:#1a1a1a;transform:scaleX(0.8700);transform-origin:0 0;">Dog</div>
<svg class="a" style="left:224px;top:810px;" width="37" height="13" viewBox="0 0 37 13"><g fill="none" stroke="#c4c4c8" stroke-width="1.9" stroke-linejoin="round"><path d="M2.4 12l.7-3.2 6.8-6.8a1.4 1.4 0 0 1 2 0l.6.6a1.4 1.4 0 0 1 0 2L5.7 11.3z"/><path d="M8.7 3.3l2.3 2.3"/></g><path d="M20.3 6.8C22 3.6 24.8 2.2 28 2.2s6 1.4 7.7 4.6C34 10 31.2 11.4 28 11.4S22 10 20.3 6.8z" fill="none" stroke="#c4c4c8" stroke-width="2.2" stroke-linejoin="round"/><circle cx="28" cy="6.8" r="3.2" fill="#c4c4c8"/><path d="M27.7 5v2.2h2" stroke="#fff" stroke-width="1.1" fill="none"/></svg>
<div class="a nw" style="left:371.00px;top:805.55px;font-size:14px;line-height:14px;color:#0a64f4;transform:scaleX(0.8800);transform-origin:0 0;">kpimmockem@example.com</div>
<div class="a nw" style="left:550.30px;top:805.55px;font-size:14px;line-height:14px;color:#1a1a1a;transform:scaleX(0.9000);transform-origin:0 0;">(572) 675-1588</div>
<div class="a" style="left:664.2px;top:811.5px;width:59.3px;height:17px;background:#f7f7f7;border:1px solid #d4d4d4;border-radius:2px"></div>
<div class="a nw" style="left:668.12px;top:812.35px;font-size:14px;line-height:14px;color:#1a1a1a;transform:scaleX(0.8700);transform-origin:0 0;">Daedalus</div>
<div class="a" style="left:664.2px;top:836.0px;width:43.7px;height:17px;background:#f7f7f7;border:1px solid #d4d4d4;border-radius:2px"></div>
<div class="a nw" style="left:668.10px;top:836.95px;font-size:14px;line-height:14px;color:#1a1a1a;transform:scaleX(0.8700);transform-origin:0 0;">Louisa</div>
<div class="a" style="left:742.3px;top:811.5px;width:30px;height:17px;background:#f7f7f7;border:1px solid #d4d4d4;border-radius:2px"></div>
<div class="a nw" style="left:747.82px;top:812.35px;font-size:14px;line-height:14px;color:#1a1a1a;transform:scaleX(0.8700);transform-origin:0 0;">Cat</div>
<svg class="a" style="left:224px;top:874px;" width="37" height="13" viewBox="0 0 37 13"><g fill="none" stroke="#c4c4c8" stroke-width="1.9" stroke-linejoin="round"><path d="M2.4 12l.7-3.2 6.8-6.8a1.4 1.4 0 0 1 2 0l.6.6a1.4 1.4 0 0 1 0 2L5.7 11.3z"/><path d="M8.7 3.3l2.3 2.3"/></g><path d="M20.3 6.8C22 3.6 24.8 2.2 28 2.2s6 1.4 7.7 4.6C34 10 31.2 11.4 28 11.4S22 10 20.3 6.8z" fill="none" stroke="#c4c4c8" stroke-width="2.2" stroke-linejoin="round"/><circle cx="28" cy="6.8" r="3.2" fill="#c4c4c8"/><path d="M27.7 5v2.2h2" stroke="#fff" stroke-width="1.1" fill="none"/></svg>
<div class="a nw" style="left:270.00px;top:868.55px;font-size:14px;line-height:14px;color:#1a1a1a;transform:scaleX(0.8700);transform-origin:0 0;">Marv</div>
<div class="a nw" style="left:371.00px;top:868.55px;font-size:14px;line-height:14px;color:#0a64f4;transform:scaleX(0.8800);transform-origin:0 0;">marvin@example.com</div>
<div class="a" style="left:664.2px;top:873.5px;width:50.7px;height:17px;background:#f7f7f7;border:1px solid #d4d4d4;border-radius:2px"></div>
<div class="a nw" style="left:669.23px;top:874.75px;font-size:14px;line-height:14px;color:#1a1a1a;transform:scaleX(0.8700);transform-origin:0 0;">Kewpet</div>
<div class="a" style="left:742.3px;top:873.5px;width:30.4px;height:17px;background:#f7f7f7;border:1px solid #d4d4d4;border-radius:2px"></div>
<div class="a nw" style="left:746.33px;top:874.75px;font-size:14px;line-height:14px;color:#1a1a1a;transform:scaleX(0.8700);transform-origin:0 0;">ALF</div>
<svg class="a" style="left:224px;top:912px;" width="37" height="13" viewBox="0 0 37 13"><g fill="none" stroke="#c4c4c8" stroke-width="1.9" stroke-linejoin="round"><path d="M2.4 12l.7-3.2 6.8-6.8a1.4 1.4 0 0 1 2 0l.6.6a1.4 1.4 0 0 1 0 2L5.7 11.3z"/><path d="M8.7 3.3l2.3 2.3"/></g><path d="M20.3 6.8C22 3.6 24.8 2.2 28 2.2s6 1.4 7.7 4.6C34 10 31.2 11.4 28 11.4S22 10 20.3 6.8z" fill="none" stroke="#c4c4c8" stroke-width="2.2" stroke-linejoin="round"/><circle cx="28" cy="6.8" r="3.2" fill="#c4c4c8"/><path d="M27.7 5v2.2h2" stroke="#fff" stroke-width="1.1" fill="none"/></svg>
<div class="a nw" style="left:371.00px;top:906.55px;font-size:14px;line-height:14px;color:#0a64f4;transform:scaleX(0.8800);transform-origin:0 0;">dpuckring@example.com</div>
<div class="a nw" style="left:550.30px;top:906.55px;font-size:14px;line-height:14px;color:#1a1a1a;transform:scaleX(0.9000);transform-origin:0 0;">(433) 468-7290</div>
<div class="a" style="left:664.2px;top:911.5px;width:44.7px;height:17px;background:#f7f7f7;border:1px solid #d4d4d4;border-radius:2px"></div>
<div class="a nw" style="left:669.29px;top:912.75px;font-size:14px;line-height:14px;color:#1a1a1a;transform:scaleX(0.8700);transform-origin:0 0;">Minkis</div>
<div class="a" style="left:742.3px;top:911.5px;width:30px;height:17px;background:#f7f7f7;border:1px solid #d4d4d4;border-radius:2px"></div>
<div class="a nw" style="left:747.82px;top:912.75px;font-size:14px;line-height:14px;color:#1a1a1a;transform:scaleX(0.8700);transform-origin:0 0;">Cat</div>
<svg class="a" style="left:628px;top:523px;" width="12" height="19" viewBox="0 0 12 19"><path d="M1 1v15l3.5-3.3 2.4 5.3 2.2-1-2.4-5.2H11z" fill="#fff" stroke="#222" stroke-width="1"/></svg>
<div class="a" style="left:856px;top:314px;width:667px;height:622px;background:#fff;border:1px solid #d2d2d6"></div>
<div class="a nw" style="left:871.40px;top:330.05px;font-size:14px;line-height:14px;color:#1a1a1a;transform:scaleX(0.9233);transform-origin:0 0;">Pets shaded in red do not have a current vaccination</div>
<div class="a" style="left:857px;top:362px;width:665px;height:43px;background:#77737b"></div>
<div class="a" style="left:1014px;top:362px;width:1px;height:43px;background:#c9c7cc"></div>
<div class="a" style="left:1086px;top:362px;width:1px;height:43px;background:#c9c7cc"></div>
<div class="a" style="left:1279px;top:362px;width:1px;height:43px;background:#c9c7cc"></div>
<div class="a" style="left:1351px;top:362px;width:1px;height:43px;background:#c9c7cc"></div>
<div class="a" style="left:1453px;top:362px;width:1px;height:43px;background:#c9c7cc"></div>
<div class="a nw" style="left:943.35px;top:366.45px;font-size:14px;line-height:14px;color:#fff;font-weight:bold;transform:scaleX(0.8941);transform-origin:0 0;">Name</div>
<div class="a nw" style="left:1021.00px;top:366.45px;font-size:14px;line-height:14px;color:#fff;font-weight:bold;transform:scaleX(0.8849);transform-origin:0 0;">Type</div>
<div class="a nw" style="left:1094.00px;top:366.45px;font-size:14px;line-height:14px;color:#fff;font-weight:bold;transform:scaleX(0.8315);transform-origin:0 0;">Breed</div>
<div class="a nw" style="left:1285.60px;top:366.45px;font-size:14px;line-height:14px;color:#fff;font-weight:bold;transform:scaleX(0.8627);transform-origin:0 0;">Sex</div>
<div class="a nw" style="left:1367.20px;top:366.45px;font-size:14px;line-height:14px;color:#fff;font-weight:bold;transform:scaleX(0.8688);transform-origin:0 0;">Vaccination</div>
<div class="a nw" style="left:1388.95px;top:380.45px;font-size:14px;line-height:14px;color:#fff;font-weight:bold;transform:scaleX(0.9058);transform-origin:0 0;">Date</div>
<div class="a nw" style="left:1460.00px;top:366.45px;font-size:14px;line-height:14px;color:#fff;font-weight:bold;transform:scaleX(0.8629);transform-origin:0 0;">Customer</div>
<div class="a" style="left:857px;top:405px;width:648px;height:498px;overflow:hidden">
<div class="a" style="left:0px;top:32px;width:649px;height:1px;background:#d6d6d6"></div>
<div class="a" style="left:0px;top:64px;width:649px;height:1px;background:#d6d6d6"></div>
<div class="a" style="left:0px;top:96px;width:649px;height:1px;background:#d6d6d6"></div>
<div class="a" style="left:0px;top:128px;width:649px;height:1px;background:#d6d6d6"></div>
<div class="a" style="left:0px;top:161px;width:649px;height:32px;background:#fbe7e7"></div>
<div class="a" style="left:0px;top:161px;width:649px;height:1px;background:#d6d6d6"></div>
<div class="a" style="left:0px;top:193px;width:649px;height:1px;background:#d6d6d6"></div>
<div class="a" style="left:0px;top:225px;width:649px;height:1px;background:#d6d6d6"></div>
<div class="a" style="left:0px;top:257px;width:649px;height:32px;background:#fbe7e7"></div>
<div class="a" style="left:0px;top:257px;width:649px;height:1px;background:#d6d6d6"></div>
<div class="a" style="left:0px;top:289px;width:649px;height:1px;background:#d6d6d6"></div>
<div class="a" style="left:0px;top:322px;width:649px;height:1px;background:#d6d6d6"></div>
<div class="a" style="left:0px;top:354px;width:649px;height:1px;background:#d6d6d6"></div>
<div class="a" style="left:0px;top:386px;width:649px;height:1px;background:#d6d6d6"></div>
<div class="a" style="left:0px;top:418px;width:649px;height:1px;background:#d6d6d6"></div>
<div class="a" style="left:0px;top:450px;width:649px;height:32px;background:#fbe7e7"></div>
<div class="a" style="left:0px;top:450px;width:649px;height:1px;background:#d6d6d6"></div>
<div class="a" style="left:0px;top:482px;width:649px;height:32px;background:#fbe7e7"></div>
<div class="a" style="left:0px;top:482px;width:649px;height:1px;background:#d6d6d6"></div>
<div class="a" style="left:157px;top:0px;width:1px;height:498px;background:#d6d6d6"></div>
<div class="a" style="left:229px;top:0px;width:1px;height:498px;background:#d6d6d6"></div>
<div class="a" style="left:422px;top:0px;width:1px;height:498px;background:#d6d6d6"></div>
<div class="a" style="left:494px;top:0px;width:1px;height:498px;background:#d6d6d6"></div>
<div class="a" style="left:596px;top:0px;width:1px;height:498px;background:#d6d6d6"></div>
<svg class="a" style="left:41px;top:9px;" width="37" height="13" viewBox="0 0 37 13"><g fill="none" stroke="#c4c4c8" stroke-width="1.9" stroke-linejoin="round"><path d="M2.4 12l.7-3.2 6.8-6.8a1.4 1.4 0 0 1 2 0l.6.6a1.4 1.4 0 0 1 0 2L5.7 11.3z"/><path d="M8.7 3.3l2.3 2.3"/></g><path d="M20.3 6.8C22 3.6 24.8 2.2 28 2.2s6 1.4 7.7 4.6C34 10 31.2 11.4 28 11.4S22 10 20.3 6.8z" fill="none" stroke="#c4c4c8" stroke-width="2.2" stroke-linejoin="round"/><circle cx="28" cy="6.8" r="3.2" fill="#c4c4c8"/><path d="M27.7 5v2.2h2" stroke="#fff" stroke-width="1.1" fill="none"/></svg>
<div class="a nw" style="left:86.40px;top:4.15px;font-size:14px;line-height:14px;color:#1a1a1a;transform:scaleX(0.8800);transform-origin:0 0;">Arya</div>
<div class="a nw" style="left:164.00px;top:4.15px;font-size:14px;line-height:14px;color:#1a1a1a;transform:scaleX(0.8800);transform-origin:0 0;">Cat</div>
<div class="a nw" style="left:237.00px;top:4.95px;font-size:14px;line-height:14px;color:#0a64f4;transform:scaleX(0.8600);transform-origin:0 0;">Exotic</div>
<div class="a nw" style="left:428.60px;top:4.15px;font-size:14px;line-height:14px;color:#1a1a1a;transform:scaleX(0.8800);transform-origin:0 0;">Female</div>
<div class="a nw" style="left:513.17px;top:4.15px;font-size:14px;line-height:14px;color:#1a1a1a;transform:scaleX(0.9000);transform-origin:0 0;">01-31-2021</div>
<svg class="a" style="left:41px;top:42px;" width="37" height="13" viewBox="0 0 37 13"><g fill="none" stroke="#c4c4c8" stroke-width="1.9" stroke-linejoin="round"><path d="M2.4 12l.7-3.2 6.8-6.8a1.4 1.4 0 0 1 2 0l.6.6a1.4 1.4 0 0 1 0 2L5.7 11.3z"/><path d="M8.7 3.3l2.3 2.3"/></g><path d="M20.3 6.8C22 3.6 24.8 2.2 28 2.2s6 1.4 7.7 4.6C34 10 31.2 11.4 28 11.4S22 10 20.3 6.8z" fill="none" stroke="#c4c4c8" stroke-width="2.2" stroke-linejoin="round"/><circle cx="28" cy="6.8" r="3.2" fill="#c4c4c8"/><path d="M27.7 5v2.2h2" stroke="#fff" stroke-width="1.1" fill="none"/></svg>
<div class="a nw" style="left:86.40px;top:36.35px;font-size:14px;line-height:14px;color:#1a1a1a;transform:scaleX(0.8800);transform-origin:0 0;">Cayden</div>
<div class="a nw" style="left:164.00px;top:36.35px;font-size:14px;line-height:14px;color:#1a1a1a;transform:scaleX(0.8800);transform-origin:0 0;">Dog</div>
<div class="a nw" style="left:237.00px;top:37.15px;font-size:14px;line-height:14px;color:#0a64f4;transform:scaleX(0.8600);transform-origin:0 0;">Pointers (German Shorthaired)</div>
<div class="a nw" style="left:428.60px;top:36.35px;font-size:14px;line-height:14px;color:#1a1a1a;transform:scaleX(0.8800);transform-origin:0 0;">Male</div>
<div class="a nw" style="left:513.64px;top:36.35px;font-size:14px;line-height:14px;color:#1a1a1a;transform:scaleX(0.9000);transform-origin:0 0;">11-18-2020</div>
<svg class="a" style="left:41px;top:74px;" width="37" height="13" viewBox="0 0 37 13"><g fill="none" stroke="#c4c4c8" stroke-width="1.9" stroke-linejoin="round"><path d="M2.4 12l.7-3.2 6.8-6.8a1.4 1.4 0 0 1 2 0l.6.6a1.4 1.4 0 0 1 0 2L5.7 11.3z"/><path d="M8.7 3.3l2.3 2.3"/></g><path d="M20.3 6.8C22 3.6 24.8 2.2 28 2.2s6 1.4 7.7 4.6C34 10 31.2 11.4 28 11.4S22 10 20.3 6.8z" fill="none" stroke="#c4c4c8" stroke-width="2.2" stroke-linejoin="round"/><circle cx="28" cy="6.8" r="3.2" fill="#c4c4c8"/><path d="M27.7 5v2.2h2" stroke="#fff" stroke-width="1.1" fill="none"/></svg>
<div class="a nw" style="left:86.40px;top:68.35px;font-size:14px;line-height:14px;color:#1a1a1a;transform:scaleX(0.8800);transform-origin:0 0;">Corri</div>
<div class="a nw" style="left:164.00px;top:68.35px;font-size:14px;line-height:14px;color:#1a1a1a;transform:scaleX(0.8800);transform-origin:0 0;">Dog</div>
<div class="a nw" style="left:237.00px;top:69.15px;font-size:14px;line-height:14px;color:#0a64f4;transform:scaleX(0.8600);transform-origin:0 0;">Labrador Retriever</div>
<div class="a nw" style="left:428.60px;top:68.35px;font-size:14px;line-height:14px;color:#1a1a1a;transform:scaleX(0.8800);transform-origin:0 0;">Male</div>
<div class="a nw" style="left:513.17px;top:68.35px;font-size:14px;line-height:14px;color:#1a1a1a;transform:scaleX(0.9000);transform-origin:0 0;">09-09-2021</div>
<svg class="a" style="left:41px;top:106px;" width="37" height="13" viewBox="0 0 37 13"><g fill="none" stroke="#c4c4c8" stroke-width="1.9" stroke-linejoin="round"><path d="M2.4 12l.7-3.2 6.8-6.8a1.4 1.4 0 0 1 2 0l.6.6a1.4 1.4 0 0 1 0 2L5.7 11.3z"/><path d="M8.7 3.3l2.3 2.3"/></g><path d="M20.3 6.8C22 3.6 24.8 2.2 28 2.2s6 1.4 7.7 4.6C34 10 31.2 11.4 28 11.4S22 10 20.3 6.8z" fill="none" stroke="#c4c4c8" stroke-width="2.2" stroke-linejoin="round"/><circle cx="28" cy="6.8" r="3.2" fill="#c4c4c8"/><path d="M27.7 5v2.2h2" stroke="#fff" stroke-width="1.1" fill="none"/></svg>
<div class="a nw" style="left:86.40px;top:100.35px;font-size:14px;line-height:14px;color:#1a1a1a;transform:scaleX(0.8800);transform-origin:0 0;">Daedalus</div>
<div class="a nw" style="left:164.00px;top:100.35px;font-size:14px;line-height:14px;color:#1a1a1a;transform:scaleX(0.8800);transform-origin:0 0;">Cat</div>
<div class="a nw" style="left:237.00px;top:101.15px;font-size:14px;line-height:14px;color:#0a64f4;transform:scaleX(0.8600);transform-origin:0 0;">Exotic</div>
<div class="a nw" style="left:428.60px;top:100.35px;font-size:14px;line-height:14px;color:#1a1a1a;transform:scaleX(0.8800);transform-origin:0 0;">Male</div>
<div class="a nw" style="left:513.17px;top:100.35px;font-size:14px;line-height:14px;color:#1a1a1a;transform:scaleX(0.9000);transform-origin:0 0;">03-10-2021</div>
<svg class="a" style="left:41px;top:138px;" width="37" height="13" viewBox="0 0 37 13"><g fill="none" stroke="#c4c4c8" stroke-width="1.9" stroke-linejoin="round"><path d="M2.4 12l.7-3.2 6.8-6.8a1.4 1.4 0 0 1 2 0l.6.6a1.4 1.4 0 0 1 0 2L5.7 11.3z"/><path d="M8.7 3.3l2.3 2.3"/></g><path d="M20.3 6.8C22 3.6 24.8 2.2 28 2.2s6 1.4 7.7 4.6C34 10 31.2 11.4 28 11.4S22 10 20.3 6.8z" fill="none" stroke="#c4c4c8" stroke-width="2.2" stroke-linejoin="round"/><circle cx="28" cy="6.8" r="3.2" fill="#c4c4c8"/><path d="M27.7 5v2.2h2" stroke="#fff" stroke-width="1.1" fill="none"/></svg>
<div class="a nw" style="left:86.40px;top:132.35px;font-size:14px;line-height:14px;color:#1a1a1a;transform:scaleX(0.8800);transform-origin:0 0;">Fireball</div>
<div class="a nw" style="left:164.00px;top:132.35px;font-size:14px;line-height:14px;color:#1a1a1a;transform:scaleX(0.8800);transform-origin:0 0;">ALF</div>
<div class="a nw" style="left:237.00px;top:133.15px;font-size:14px;line-height:14px;color:#0a64f4;transform:scaleX(0.8600);transform-origin:0 0;">Zilxik</div>
<div class="a nw" style="left:428.60px;top:132.35px;font-size:14px;line-height:14px;color:#1a1a1a;transform:scaleX(0.8800);transform-origin:0 0;">Female</div>
<div class="a nw" style="left:513.17px;top:132.35px;font-size:14px;line-height:14px;color:#1a1a1a;transform:scaleX(0.9000);transform-origin:0 0;">08-01-2022</div>
<div class="a" style="left:6px;top:163px;width:4px;height:29px;background:#d81a0c;border-radius:2px"></div>
<svg class="a" style="left:41px;top:171px;" width="37" height="13" viewBox="0 0 37 13"><g fill="none" stroke="#c4c4c8" stroke-width="1.9" stroke-linejoin="round"><path d="M2.4 12l.7-3.2 6.8-6.8a1.4 1.4 0 0 1 2 0l.6.6a1.4 1.4 0 0 1 0 2L5.7 11.3z"/><path d="M8.7 3.3l2.3 2.3"/></g><path d="M20.3 6.8C22 3.6 24.8 2.2 28 2.2s6 1.4 7.7 4.6C34 10 31.2 11.4 28 11.4S22 10 20.3 6.8z" fill="none" stroke="#c4c4c8" stroke-width="2.2" stroke-linejoin="round"/><circle cx="28" cy="6.8" r="3.2" fill="#c4c4c8"/><path d="M27.7 5v2.2h2" stroke="#fff" stroke-width="1.1" fill="none"/></svg>
<div class="a nw" style="left:86.40px;top:165.35px;font-size:14px;line-height:14px;color:#1a1a1a;transform:scaleX(0.8800);transform-origin:0 0;">Gidget</div>
<div class="a nw" style="left:164.00px;top:165.35px;font-size:14px;line-height:14px;color:#1a1a1a;transform:scaleX(0.8800);transform-origin:0 0;">Dog</div>
<div class="a nw" style="left:237.00px;top:166.15px;font-size:14px;line-height:14px;color:#0a64f4;transform:scaleX(0.8600);transform-origin:0 0;">Poodle</div>
<div class="a nw" style="left:428.60px;top:165.35px;font-size:14px;line-height:14px;color:#1a1a1a;transform:scaleX(0.8800);transform-origin:0 0;">Female</div>
<div class="a nw" style="left:513.64px;top:165.35px;font-size:14px;line-height:14px;color:#1a1a1a;transform:scaleX(0.9000);transform-origin:0 0;">11-08-2017</div>
<svg class="a" style="left:41px;top:203px;" width="37" height="13" viewBox="0 0 37 13"><g fill="none" stroke="#c4c4c8" stroke-width="1.9" stroke-linejoin="round"><path d="M2.4 12l.7-3.2 6.8-6.8a1.4 1.4 0 0 1 2 0l.6.6a1.4 1.4 0 0 1 0 2L5.7 11.3z"/><path d="M8.7 3.3l2.3 2.3"/></g><path d="M20.3 6.8C22 3.6 24.8 2.2 28 2.2s6 1.4 7.7 4.6C34 10 31.2 11.4 28 11.4S22 10 20.3 6.8z" fill="none" stroke="#c4c4c8" stroke-width="2.2" stroke-linejoin="round"/><circle cx="28" cy="6.8" r="3.2" fill="#c4c4c8"/><path d="M27.7 5v2.2h2" stroke="#fff" stroke-width="1.1" fill="none"/></svg>
<div class="a nw" style="left:86.40px;top:197.35px;font-size:14px;line-height:14px;color:#1a1a1a;transform:scaleX(0.8800);transform-origin:0 0;">Kewpet</div>
<div class="a nw" style="left:164.00px;top:197.35px;font-size:14px;line-height:14px;color:#1a1a1a;transform:scaleX(0.8800);transform-origin:0 0;">ALF</div>
<div class="a nw" style="left:237.00px;top:198.15px;font-size:14px;line-height:14px;color:#0a64f4;transform:scaleX(0.8600);transform-origin:0 0;">Zilxik</div>
<div class="a nw" style="left:428.60px;top:197.35px;font-size:14px;line-height:14px;color:#1a1a1a;transform:scaleX(0.8800);transform-origin:0 0;">Male</div>
<div class="a nw" style="left:513.17px;top:197.35px;font-size:14px;line-height:14px;color:#1a1a1a;transform:scaleX(0.9000);transform-origin:0 0;">01-04-2023</div>
<div class="a nw" style="left:604.20px;top:198.15px;font-size:14px;line-height:14px;color:#0a64f4;transform:scaleX(0.8800);transform-origin:0 0;">Marv</div>
<svg class="a" style="left:41px;top:235px;" width="37" height="13" viewBox="0 0 37 13"><g fill="none" stroke="#c4c4c8" stroke-width="1.9" stroke-linejoin="round"><path d="M2.4 12l.7-3.2 6.8-6.8a1.4 1.4 0 0 1 2 0l.6.6a1.4 1.4 0 0 1 0 2L5.7 11.3z"/><path d="M8.7 3.3l2.3 2.3"/></g><path d="M20.3 6.8C22 3.6 24.8 2.2 28 2.2s6 1.4 7.7 4.6C34 10 31.2 11.4 28 11.4S22 10 20.3 6.8z" fill="none" stroke="#c4c4c8" stroke-width="2.2" stroke-linejoin="round"/><circle cx="28" cy="6.8" r="3.2" fill="#c4c4c8"/><path d="M27.7 5v2.2h2" stroke="#fff" stroke-width="1.1" fill="none"/></svg>
<div class="a nw" style="left:86.40px;top:229.35px;font-size:14px;line-height:14px;color:#1a1a1a;transform:scaleX(0.8800);transform-origin:0 0;">Louisa</div>
<div class="a nw" style="left:164.00px;top:229.35px;font-size:14px;line-height:14px;color:#1a1a1a;transform:scaleX(0.8800);transform-origin:0 0;">Cat</div>
<div class="a nw" style="left:237.00px;top:230.15px;font-size:14px;line-height:14px;color:#0a64f4;transform:scaleX(0.8600);transform-origin:0 0;">Exotic</div>
<div class="a nw" style="left:428.60px;top:229.35px;font-size:14px;line-height:14px;color:#1a1a1a;transform:scaleX(0.8800);transform-origin:0 0;">Female</div>
<div class="a nw" style="left:513.17px;top:229.35px;font-size:14px;line-height:14px;color:#1a1a1a;transform:scaleX(0.9000);transform-origin:0 0;">10-14-2021</div>
<div class="a" style="left:6px;top:259px;width:4px;height:29px;background:#d81a0c;border-radius:2px"></div>
<svg class="a" style="left:41px;top:267px;" width="37" height="13" viewBox="0 0 37 13"><g fill="none" stroke="#c4c4c8" stroke-width="1.9" stroke-linejoin="round"><path d="M2.4 12l.7-3.2 6.8-6.8a1.4 1.4 0 0 1 2 0l.6.6a1.4 1.4 0 0 1 0 2L5.7 11.3z"/><path d="M8.7 3.3l2.3 2.3"/></g><path d="M20.3 6.8C22 3.6 24.8 2.2 28 2.2s6 1.4 7.7 4.6C34 10 31.2 11.4 28 11.4S22 10 20.3 6.8z" fill="none" stroke="#c4c4c8" stroke-width="2.2" stroke-linejoin="round"/><circle cx="28" cy="6.8" r="3.2" fill="#c4c4c8"/><path d="M27.7 5v2.2h2" stroke="#fff" stroke-width="1.1" fill="none"/></svg>
<div class="a nw" style="left:86.40px;top:261.35px;font-size:14px;line-height:14px;color:#1a1a1a;transform:scaleX(0.8800);transform-origin:0 0;">Meowburt</div>
<div class="a nw" style="left:164.00px;top:261.35px;font-size:14px;line-height:14px;color:#1a1a1a;transform:scaleX(0.8800);transform-origin:0 0;">Cat</div>
<div class="a nw" style="left:237.00px;top:262.15px;font-size:14px;line-height:14px;color:#0a64f4;transform:scaleX(0.8600);transform-origin:0 0;">Exotic</div>
<div class="a nw" style="left:428.60px;top:261.35px;font-size:14px;line-height:14px;color:#1a1a1a;transform:scaleX(0.8800);transform-origin:0 0;">Male</div>
<div class="a nw" style="left:513.17px;top:261.35px;font-size:14px;line-height:14px;color:#1a1a1a;transform:scaleX(0.9000);transform-origin:0 0;">06-03-2020</div>
<svg class="a" style="left:41px;top:299px;" width="37" height="13" viewBox="0 0 37 13"><g fill="none" stroke="#c4c4c8" stroke-width="1.9" stroke-linejoin="round"><path d="M2.4 12l.7-3.2 6.8-6.8a1.4 1.4 0 0 1 2 0l.6.6a1.4 1.4 0 0 1 0 2L5.7 11.3z"/><path d="M8.7 3.3l2.3 2.3"/></g><path d="M20.3 6.8C22 3.6 24.8 2.2 28 2.2s6 1.4 7.7 4.6C34 10 31.2 11.4 28 11.4S22 10 20.3 6.8z" fill="none" stroke="#c4c4c8" stroke-width="2.2" stroke-linejoin="round"/><circle cx="28" cy="6.8" r="3.2" fill="#c4c4c8"/><path d="M27.7 5v2.2h2" stroke="#fff" stroke-width="1.1" fill="none"/></svg>
<div class="a nw" style="left:86.40px;top:293.35px;font-size:14px;line-height:14px;color:#1a1a1a;transform:scaleX(0.8800);transform-origin:0 0;">Mina</div>
<div class="a nw" style="left:164.00px;top:293.35px;font-size:14px;line-height:14px;color:#1a1a1a;transform:scaleX(0.8800);transform-origin:0 0;">Cat</div>
<div class="a nw" style="left:237.00px;top:294.15px;font-size:14px;line-height:14px;color:#0a64f4;transform:scaleX(0.8600);transform-origin:0 0;">Exotic</div>
<div class="a nw" style="left:428.60px;top:293.35px;font-size:14px;line-height:14px;color:#1a1a1a;transform:scaleX(0.8800);transform-origin:0 0;">Female</div>
<div class="a nw" style="left:513.17px;top:293.35px;font-size:14px;line-height:14px;color:#1a1a1a;transform:scaleX(0.9000);transform-origin:0 0;">03-09-2021</div>
<svg class="a" style="left:41px;top:332px;" width="37" height="13" viewBox="0 0 37 13"><g fill="none" stroke="#c4c4c8" stroke-width="1.9" stroke-linejoin="round"><path d="M2.4 12l.7-3.2 6.8-6.8a1.4 1.4 0 0 1 2 0l.6.6a1.4 1.4 0 0 1 0 2L5.7 11.3z"/><path d="M8.7 3.3l2.3 2.3"/></g><path d="M20.3 6.8C22 3.6 24.8 2.2 28 2.2s6 1.4 7.7 4.6C34 10 31.2 11.4 28 11.4S22 10 20.3 6.8z" fill="none" stroke="#c4c4c8" stroke-width="2.2" stroke-linejoin="round"/><circle cx="28" cy="6.8" r="3.2" fill="#c4c4c8"/><path d="M27.7 5v2.2h2" stroke="#fff" stroke-width="1.1" fill="none"/></svg>
<div class="a nw" style="left:86.40px;top:326.35px;font-size:14px;line-height:14px;color:#1a1a1a;transform:scaleX(0.8800);transform-origin:0 0;">Minkis</div>
<div class="a nw" style="left:164.00px;top:326.35px;font-size:14px;line-height:14px;color:#1a1a1a;transform:scaleX(0.8800);transform-origin:0 0;">Cat</div>
<div class="a nw" style="left:237.00px;top:327.15px;font-size:14px;line-height:14px;color:#0a64f4;transform:scaleX(0.8600);transform-origin:0 0;">Chartreux</div>
<div class="a nw" style="left:428.60px;top:326.35px;font-size:14px;line-height:14px;color:#1a1a1a;transform:scaleX(0.8800);transform-origin:0 0;">Female</div>
<div class="a nw" style="left:513.17px;top:326.35px;font-size:14px;line-height:14px;color:#1a1a1a;transform:scaleX(0.9000);transform-origin:0 0;">08-20-2020</div>
<svg class="a" style="left:41px;top:364px;" width="37" height="13" viewBox="0 0 37 13"><g fill="none" stroke="#c4c4c8" stroke-width="1.9" stroke-linejoin="round"><path d="M2.4 12l.7-3.2 6.8-6.8a1.4 1.4 0 0 1 2 0l.6.6a1.4 1.4 0 0 1 0 2L5.7 11.3z"/><path d="M8.7 3.3l2.3 2.3"/></g><path d="M20.3 6.8C22 3.6 24.8 2.2 28 2.2s6 1.4 7.7 4.6C34 10 31.2 11.4 28 11.4S22 10 20.3 6.8z" fill="none" stroke="#c4c4c8" stroke-width="2.2" stroke-linejoin="round"/><circle cx="28" cy="6.8" r="3.2" fill="#c4c4c8"/><path d="M27.7 5v2.2h2" stroke="#fff" stroke-width="1.1" fill="none"/></svg>
<div class="a nw" style="left:86.40px;top:358.35px;font-size:14px;line-height:14px;color:#1a1a1a;transform:scaleX(0.8800);transform-origin:0 0;">Mitzi</div>
<div class="a nw" style="left:164.00px;top:358.35px;font-size:14px;line-height:14px;color:#1a1a1a;transform:scaleX(0.8800);transform-origin:0 0;">Cat</div>
<div class="a nw" style="left:237.00px;top:359.15px;font-size:14px;line-height:14px;color:#0a64f4;transform:scaleX(0.8600);transform-origin:0 0;">Persian</div>
<div class="a nw" style="left:428.60px;top:358.35px;font-size:14px;line-height:14px;color:#1a1a1a;transform:scaleX(0.8800);transform-origin:0 0;">Female</div>
<div class="a nw" style="left:513.17px;top:358.35px;font-size:14px;line-height:14px;color:#1a1a1a;transform:scaleX(0.9000);transform-origin:0 0;">12-14-2021</div>
<svg class="a" style="left:41px;top:396px;" width="37" height="13" viewBox="0 0 37 13"><g fill="none" stroke="#c4c4c8" stroke-width="1.9" stroke-linejoin="round"><path d="M2.4 12l.7-3.2 6.8-6.8a1.4 1.4 0 0 1 2 0l.6.6a1.4 1.4 0 0 1 0 2L5.7 11.3z"/><path d="M8.7 3.3l2.3 2.3"/></g><path d="M20.3 6.8C22 3.6 24.8 2.2 28 2.2s6 1.4 7.7 4.6C34 10 31.2 11.4 28 11.4S22 10 20.3 6.8z" fill="none" stroke="#c4c4c8" stroke-width="2.2" stroke-linejoin="round"/><circle cx="28" cy="6.8" r="3.2" fill="#c4c4c8"/><path d="M27.7 5v2.2h2" stroke="#fff" stroke-width="1.1" fill="none"/></svg>
<div class="a nw" style="left:86.40px;top:390.35px;font-size:14px;line-height:14px;color:#1a1a1a;transform:scaleX(0.8800);transform-origin:0 0;">Nuggy</div>
<div class="a nw" style="left:164.00px;top:390.35px;font-size:14px;line-height:14px;color:#1a1a1a;transform:scaleX(0.8800);transform-origin:0 0;">Dog</div>
<div class="a nw" style="left:237.00px;top:391.15px;font-size:14px;line-height:14px;color:#0a64f4;transform:scaleX(0.8600);transform-origin:0 0;">Dachshunds</div>
<div class="a nw" style="left:428.60px;top:390.35px;font-size:14px;line-height:14px;color:#1a1a1a;transform:scaleX(0.8800);transform-origin:0 0;">Male</div>
<div class="a nw" style="left:513.17px;top:390.35px;font-size:14px;line-height:14px;color:#1a1a1a;transform:scaleX(0.9000);transform-origin:0 0;">03-01-2021</div>
<svg class="a" style="left:41px;top:428px;" width="37" height="13" viewBox="0 0 37 13"><g fill="none" stroke="#c4c4c8" stroke-width="1.9" stroke-linejoin="round"><path d="M2.4 12l.7-3.2 6.8-6.8a1.4 1.4 0 0 1 2 0l.6.6a1.4 1.4 0 0 1 0 2L5.7 11.3z"/><path d="M8.7 3.3l2.3 2.3"/></g><path d="M20.3 6.8C22 3.6 24.8 2.2 28 2.2s6 1.4 7.7 4.6C34 10 31.2 11.4 28 11.4S22 10 20.3 6.8z" fill="none" stroke="#c4c4c8" stroke-width="2.2" stroke-linejoin="round"/><circle cx="28" cy="6.8" r="3.2" fill="#c4c4c8"/><path d="M27.7 5v2.2h2" stroke="#fff" stroke-width="1.1" fill="none"/></svg>
<div class="a nw" style="left:86.40px;top:422.35px;font-size:14px;line-height:14px;color:#1a1a1a;transform:scaleX(0.8800);transform-origin:0 0;">Ophelia</div>
<div class="a nw" style="left:164.00px;top:422.35px;font-size:14px;line-height:14px;color:#1a1a1a;transform:scaleX(0.8800);transform-origin:0 0;">Cat</div>
<div class="a nw" style="left:237.00px;top:423.15px;font-size:14px;line-height:14px;color:#0a64f4;transform:scaleX(0.8600);transform-origin:0 0;">British Shorthair</div>
<div class="a nw" style="left:428.60px;top:422.35px;font-size:14px;line-height:14px;color:#1a1a1a;transform:scaleX(0.8800);transform-origin:0 0;">Female</div>
<div class="a nw" style="left:604.20px;top:423.15px;font-size:14px;line-height:14px;color:#0a64f4;transform:scaleX(0.8800);transform-origin:0 0;">Gaby Gabi</div>
<div class="a" style="left:6px;top:452px;width:4px;height:29px;background:#d81a0c;border-radius:2px"></div>
<svg class="a" style="left:41px;top:460px;" width="37" height="13" viewBox="0 0 37 13"><g fill="none" stroke="#c4c4c8" stroke-width="1.9" stroke-linejoin="round"><path d="M2.4 12l.7-3.2 6.8-6.8a1.4 1.4 0 0 1 2 0l.6.6a1.4 1.4 0 0 1 0 2L5.7 11.3z"/><path d="M8.7 3.3l2.3 2.3"/></g><path d="M20.3 6.8C22 3.6 24.8 2.2 28 2.2s6 1.4 7.7 4.6C34 10 31.2 11.4 28 11.4S22 10 20.3 6.8z" fill="none" stroke="#c4c4c8" stroke-width="2.2" stroke-linejoin="round"/><circle cx="28" cy="6.8" r="3.2" fill="#c4c4c8"/><path d="M27.7 5v2.2h2" stroke="#fff" stroke-width="1.1" fill="none"/></svg>
<div class="a nw" style="left:86.40px;top:454.35px;font-size:14px;line-height:14px;color:#1a1a1a;transform:scaleX(0.8800);transform-origin:0 0;">Sassy</div>
<div class="a nw" style="left:164.00px;top:454.35px;font-size:14px;line-height:14px;color:#1a1a1a;transform:scaleX(0.8800);transform-origin:0 0;">Dog</div>
<div class="a nw" style="left:237.00px;top:455.15px;font-size:14px;line-height:14px;color:#0a64f4;transform:scaleX(0.8600);transform-origin:0 0;">Dachshunds</div>
<div class="a nw" style="left:428.60px;top:454.35px;font-size:14px;line-height:14px;color:#1a1a1a;transform:scaleX(0.8800);transform-origin:0 0;">Female</div>
<div class="a nw" style="left:513.17px;top:454.35px;font-size:14px;line-height:14px;color:#1a1a1a;transform:scaleX(0.9000);transform-origin:0 0;">01-22-2020</div>
<div class="a nw" style="left:604.20px;top:455.15px;font-size:14px;line-height:14px;color:#0a64f4;transform:scaleX(0.8800);transform-origin:0 0;">Amy Rodriguez</div>
<div class="a" style="left:6px;top:484px;width:4px;height:29px;background:#d81a0c;border-radius:2px"></div>
<svg class="a" style="left:41px;top:492px;" width="37" height="13" viewBox="0 0 37 13"><g fill="none" stroke="#c4c4c8" stroke-width="1.9" stroke-linejoin="round"><path d="M2.4 12l.7-3.2 6.8-6.8a1.4 1.4 0 0 1 2 0l.6.6a1.4 1.4 0 0 1 0 2L5.7 11.3z"/><path d="M8.7 3.3l2.3 2.3"/></g><path d="M20.3 6.8C22 3.6 24.8 2.2 28 2.2s6 1.4 7.7 4.6C34 10 31.2 11.4 28 11.4S22 10 20.3 6.8z" fill="none" stroke="#c4c4c8" stroke-width="2.2" stroke-linejoin="round"/><circle cx="28" cy="6.8" r="3.2" fill="#c4c4c8"/><path d="M27.7 5v2.2h2" stroke="#fff" stroke-width="1.1" fill="none"/></svg>
<div class="a nw" style="left:86.40px;top:486.35px;font-size:14px;line-height:14px;color:#1a1a1a;transform:scaleX(0.8800);transform-origin:0 0;">Squeak</div>
<div class="a nw" style="left:164.00px;top:486.35px;font-size:14px;line-height:14px;color:#1a1a1a;transform:scaleX(0.8800);transform-origin:0 0;">Cat</div>
<div class="a nw" style="left:237.00px;top:487.15px;font-size:14px;line-height:14px;color:#0a64f4;transform:scaleX(0.8600);transform-origin:0 0;">Maine Coon</div>
<div class="a nw" style="left:428.60px;top:486.35px;font-size:14px;line-height:14px;color:#1a1a1a;transform:scaleX(0.8800);transform-origin:0 0;">Female</div>
<div class="a nw" style="left:513.17px;top:486.35px;font-size:14px;line-height:14px;color:#1a1a1a;transform:scaleX(0.9000);transform-origin:0 0;">10-03-2019</div>
</div>
<div class="a" style="left:1505px;top:405px;width:17px;height:498px;background:#f1f1f1"></div>
<div class="a" style="left:1507px;top:423px;width:13px;height:367px;background:#c1c1c1"></div>
<svg class="a" style="left:1509px;top:412px;" width="9" height="5" viewBox="0 0 9 5"><path d="M0 5L4.5 0 9 5z" fill="#a3a3a3"/></svg>
<svg class="a" style="left:1509px;top:891px;" width="9" height="5" viewBox="0 0 9 5"><path d="M0 0h9L4.5 5z" fill="#505050"/></svg>
<div class="a" style="left:857px;top:903px;width:648px;height:17px;background:#f1f1f1"></div>
<div class="a" style="left:874px;top:905px;width:571px;height:13px;background:#c1c1c1"></div>
<div class="a" style="left:1505px;top:903px;width:17px;height:17px;background:#dcdcdc"></div>
<svg class="a" style="left:862px;top:907px;" width="5" height="9" viewBox="0 0 5 9"><path d="M5 0v9L0 4.5z" fill="#a3a3a3"/></svg>
<svg class="a" style="left:1494px;top:907px;" width="5" height="9" viewBox="0 0 5 9"><path d="M0 0v9l5-4.5z" fill="#505050"/></svg>

</body></html>
